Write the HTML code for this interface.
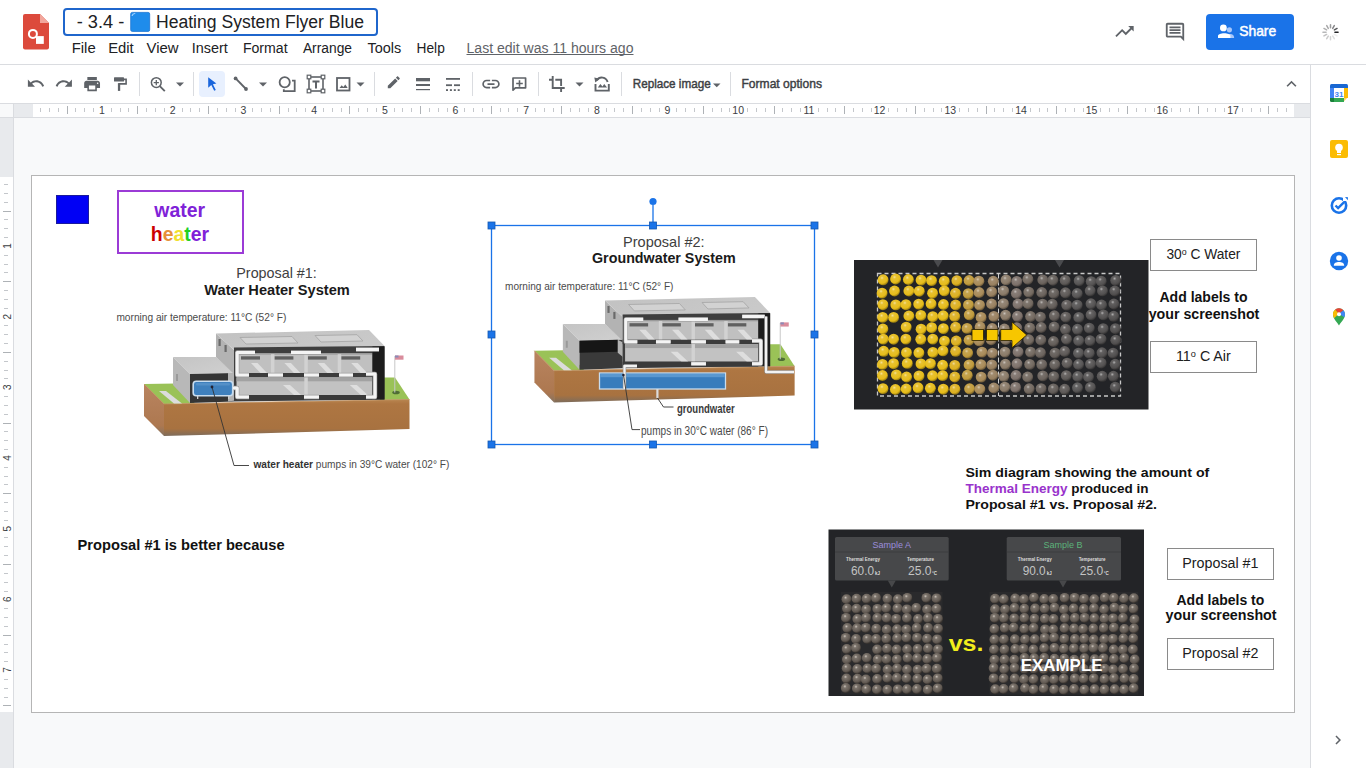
<!DOCTYPE html>
<html><head><meta charset="utf-8">
<style>
*{margin:0;padding:0;box-sizing:border-box}
html,body{width:1366px;height:768px;overflow:hidden;background:#fff;font-family:"Liberation Sans",sans-serif;color:#202124}
svg{position:absolute;left:0;top:0}
</style></head><body>

<svg width="1366" height="768" viewBox="0 0 1366 768">
<rect x="0" y="0" width="1366" height="768" fill="#ffffff"/>
<rect x="14" y="118" width="1296" height="650" fill="#f8f9fa"/>
<rect x="0" y="64" width="1366" height="1" fill="#dadce0"/>
<rect x="0" y="103" width="1310" height="1" fill="#dadce0"/>
<rect x="1310" y="65" width="1" height="703" fill="#dadce0"/>
<rect x="0" y="104" width="14" height="13" fill="#f8f9fa"/>
<rect x="14" y="104" width="19" height="13" fill="#e8eaed"/>
<rect x="1294" y="104" width="16" height="13" fill="#e8eaed"/>
<rect x="0" y="117" width="1310" height="1" fill="#dadce0"/>
<rect x="0" y="118" width="13" height="650" fill="#ffffff"/>
<rect x="0" y="118" width="13" height="59" fill="#e8eaed"/>
<rect x="0" y="712" width="13" height="56" fill="#e8eaed"/>
<rect x="13" y="104" width="1" height="664" fill="#dadce0"/>
<rect x="40" y="108" width="1" height="4" fill="#c4c7cb"/>
<rect x="49" y="108" width="1" height="4" fill="#c4c7cb"/>
<rect x="58" y="108" width="1" height="4" fill="#c4c7cb"/>
<rect x="67" y="106" width="1" height="8" fill="#aeb2b6"/>
<rect x="75" y="108" width="1" height="4" fill="#c4c7cb"/>
<rect x="84" y="108" width="1" height="4" fill="#c4c7cb"/>
<rect x="93" y="108" width="1" height="4" fill="#c4c7cb"/>
<text x="102.0" y="114" font-size="10.5" fill="#3c4043" font-weight="normal" text-anchor="middle" font-family='"Liberation Sans",sans-serif' >1</text>
<rect x="111" y="108" width="1" height="4" fill="#c4c7cb"/>
<rect x="120" y="108" width="1" height="4" fill="#c4c7cb"/>
<rect x="128" y="108" width="1" height="4" fill="#c4c7cb"/>
<rect x="137" y="106" width="1" height="8" fill="#aeb2b6"/>
<rect x="146" y="108" width="1" height="4" fill="#c4c7cb"/>
<rect x="155" y="108" width="1" height="4" fill="#c4c7cb"/>
<rect x="164" y="108" width="1" height="4" fill="#c4c7cb"/>
<text x="172.7" y="114" font-size="10.5" fill="#3c4043" font-weight="normal" text-anchor="middle" font-family='"Liberation Sans",sans-serif' >2</text>
<rect x="182" y="108" width="1" height="4" fill="#c4c7cb"/>
<rect x="190" y="108" width="1" height="4" fill="#c4c7cb"/>
<rect x="199" y="108" width="1" height="4" fill="#c4c7cb"/>
<rect x="208" y="106" width="1" height="8" fill="#aeb2b6"/>
<rect x="217" y="108" width="1" height="4" fill="#c4c7cb"/>
<rect x="226" y="108" width="1" height="4" fill="#c4c7cb"/>
<rect x="235" y="108" width="1" height="4" fill="#c4c7cb"/>
<text x="243.4" y="114" font-size="10.5" fill="#3c4043" font-weight="normal" text-anchor="middle" font-family='"Liberation Sans",sans-serif' >3</text>
<rect x="252" y="108" width="1" height="4" fill="#c4c7cb"/>
<rect x="261" y="108" width="1" height="4" fill="#c4c7cb"/>
<rect x="270" y="108" width="1" height="4" fill="#c4c7cb"/>
<rect x="279" y="106" width="1" height="8" fill="#aeb2b6"/>
<rect x="288" y="108" width="1" height="4" fill="#c4c7cb"/>
<rect x="296" y="108" width="1" height="4" fill="#c4c7cb"/>
<rect x="305" y="108" width="1" height="4" fill="#c4c7cb"/>
<text x="314.1" y="114" font-size="10.5" fill="#3c4043" font-weight="normal" text-anchor="middle" font-family='"Liberation Sans",sans-serif' >4</text>
<rect x="323" y="108" width="1" height="4" fill="#c4c7cb"/>
<rect x="332" y="108" width="1" height="4" fill="#c4c7cb"/>
<rect x="341" y="108" width="1" height="4" fill="#c4c7cb"/>
<rect x="349" y="106" width="1" height="8" fill="#aeb2b6"/>
<rect x="358" y="108" width="1" height="4" fill="#c4c7cb"/>
<rect x="367" y="108" width="1" height="4" fill="#c4c7cb"/>
<rect x="376" y="108" width="1" height="4" fill="#c4c7cb"/>
<text x="384.8" y="114" font-size="10.5" fill="#3c4043" font-weight="normal" text-anchor="middle" font-family='"Liberation Sans",sans-serif' >5</text>
<rect x="394" y="108" width="1" height="4" fill="#c4c7cb"/>
<rect x="402" y="108" width="1" height="4" fill="#c4c7cb"/>
<rect x="411" y="108" width="1" height="4" fill="#c4c7cb"/>
<rect x="420" y="106" width="1" height="8" fill="#aeb2b6"/>
<rect x="429" y="108" width="1" height="4" fill="#c4c7cb"/>
<rect x="438" y="108" width="1" height="4" fill="#c4c7cb"/>
<rect x="447" y="108" width="1" height="4" fill="#c4c7cb"/>
<text x="455.4" y="114" font-size="10.5" fill="#3c4043" font-weight="normal" text-anchor="middle" font-family='"Liberation Sans",sans-serif' >6</text>
<rect x="464" y="108" width="1" height="4" fill="#c4c7cb"/>
<rect x="473" y="108" width="1" height="4" fill="#c4c7cb"/>
<rect x="482" y="108" width="1" height="4" fill="#c4c7cb"/>
<rect x="491" y="106" width="1" height="8" fill="#aeb2b6"/>
<rect x="500" y="108" width="1" height="4" fill="#c4c7cb"/>
<rect x="508" y="108" width="1" height="4" fill="#c4c7cb"/>
<rect x="517" y="108" width="1" height="4" fill="#c4c7cb"/>
<text x="526.1" y="114" font-size="10.5" fill="#3c4043" font-weight="normal" text-anchor="middle" font-family='"Liberation Sans",sans-serif' >7</text>
<rect x="535" y="108" width="1" height="4" fill="#c4c7cb"/>
<rect x="544" y="108" width="1" height="4" fill="#c4c7cb"/>
<rect x="553" y="108" width="1" height="4" fill="#c4c7cb"/>
<rect x="561" y="106" width="1" height="8" fill="#aeb2b6"/>
<rect x="570" y="108" width="1" height="4" fill="#c4c7cb"/>
<rect x="579" y="108" width="1" height="4" fill="#c4c7cb"/>
<rect x="588" y="108" width="1" height="4" fill="#c4c7cb"/>
<text x="596.8" y="114" font-size="10.5" fill="#3c4043" font-weight="normal" text-anchor="middle" font-family='"Liberation Sans",sans-serif' >8</text>
<rect x="606" y="108" width="1" height="4" fill="#c4c7cb"/>
<rect x="614" y="108" width="1" height="4" fill="#c4c7cb"/>
<rect x="623" y="108" width="1" height="4" fill="#c4c7cb"/>
<rect x="632" y="106" width="1" height="8" fill="#aeb2b6"/>
<rect x="641" y="108" width="1" height="4" fill="#c4c7cb"/>
<rect x="650" y="108" width="1" height="4" fill="#c4c7cb"/>
<rect x="659" y="108" width="1" height="4" fill="#c4c7cb"/>
<text x="667.5" y="114" font-size="10.5" fill="#3c4043" font-weight="normal" text-anchor="middle" font-family='"Liberation Sans",sans-serif' >9</text>
<rect x="676" y="108" width="1" height="4" fill="#c4c7cb"/>
<rect x="685" y="108" width="1" height="4" fill="#c4c7cb"/>
<rect x="694" y="108" width="1" height="4" fill="#c4c7cb"/>
<rect x="703" y="106" width="1" height="8" fill="#aeb2b6"/>
<rect x="712" y="108" width="1" height="4" fill="#c4c7cb"/>
<rect x="721" y="108" width="1" height="4" fill="#c4c7cb"/>
<rect x="729" y="108" width="1" height="4" fill="#c4c7cb"/>
<text x="738.2" y="114" font-size="10.5" fill="#3c4043" font-weight="normal" text-anchor="middle" font-family='"Liberation Sans",sans-serif' >10</text>
<rect x="747" y="108" width="1" height="4" fill="#c4c7cb"/>
<rect x="756" y="108" width="1" height="4" fill="#c4c7cb"/>
<rect x="765" y="108" width="1" height="4" fill="#c4c7cb"/>
<rect x="774" y="106" width="1" height="8" fill="#aeb2b6"/>
<rect x="782" y="108" width="1" height="4" fill="#c4c7cb"/>
<rect x="791" y="108" width="1" height="4" fill="#c4c7cb"/>
<rect x="800" y="108" width="1" height="4" fill="#c4c7cb"/>
<text x="808.9" y="114" font-size="10.5" fill="#3c4043" font-weight="normal" text-anchor="middle" font-family='"Liberation Sans",sans-serif' >11</text>
<rect x="818" y="108" width="1" height="4" fill="#c4c7cb"/>
<rect x="827" y="108" width="1" height="4" fill="#c4c7cb"/>
<rect x="835" y="108" width="1" height="4" fill="#c4c7cb"/>
<rect x="844" y="106" width="1" height="8" fill="#aeb2b6"/>
<rect x="853" y="108" width="1" height="4" fill="#c4c7cb"/>
<rect x="862" y="108" width="1" height="4" fill="#c4c7cb"/>
<rect x="871" y="108" width="1" height="4" fill="#c4c7cb"/>
<text x="879.6" y="114" font-size="10.5" fill="#3c4043" font-weight="normal" text-anchor="middle" font-family='"Liberation Sans",sans-serif' >12</text>
<rect x="888" y="108" width="1" height="4" fill="#c4c7cb"/>
<rect x="897" y="108" width="1" height="4" fill="#c4c7cb"/>
<rect x="906" y="108" width="1" height="4" fill="#c4c7cb"/>
<rect x="915" y="106" width="1" height="8" fill="#aeb2b6"/>
<rect x="924" y="108" width="1" height="4" fill="#c4c7cb"/>
<rect x="933" y="108" width="1" height="4" fill="#c4c7cb"/>
<rect x="941" y="108" width="1" height="4" fill="#c4c7cb"/>
<text x="950.3" y="114" font-size="10.5" fill="#3c4043" font-weight="normal" text-anchor="middle" font-family='"Liberation Sans",sans-serif' >13</text>
<rect x="959" y="108" width="1" height="4" fill="#c4c7cb"/>
<rect x="968" y="108" width="1" height="4" fill="#c4c7cb"/>
<rect x="977" y="108" width="1" height="4" fill="#c4c7cb"/>
<rect x="986" y="106" width="1" height="8" fill="#aeb2b6"/>
<rect x="994" y="108" width="1" height="4" fill="#c4c7cb"/>
<rect x="1003" y="108" width="1" height="4" fill="#c4c7cb"/>
<rect x="1012" y="108" width="1" height="4" fill="#c4c7cb"/>
<text x="1021.0" y="114" font-size="10.5" fill="#3c4043" font-weight="normal" text-anchor="middle" font-family='"Liberation Sans",sans-serif' >14</text>
<rect x="1030" y="108" width="1" height="4" fill="#c4c7cb"/>
<rect x="1039" y="108" width="1" height="4" fill="#c4c7cb"/>
<rect x="1047" y="108" width="1" height="4" fill="#c4c7cb"/>
<rect x="1056" y="106" width="1" height="8" fill="#aeb2b6"/>
<rect x="1065" y="108" width="1" height="4" fill="#c4c7cb"/>
<rect x="1074" y="108" width="1" height="4" fill="#c4c7cb"/>
<rect x="1083" y="108" width="1" height="4" fill="#c4c7cb"/>
<text x="1091.6" y="114" font-size="10.5" fill="#3c4043" font-weight="normal" text-anchor="middle" font-family='"Liberation Sans",sans-serif' >15</text>
<rect x="1100" y="108" width="1" height="4" fill="#c4c7cb"/>
<rect x="1109" y="108" width="1" height="4" fill="#c4c7cb"/>
<rect x="1118" y="108" width="1" height="4" fill="#c4c7cb"/>
<rect x="1127" y="106" width="1" height="8" fill="#aeb2b6"/>
<rect x="1136" y="108" width="1" height="4" fill="#c4c7cb"/>
<rect x="1145" y="108" width="1" height="4" fill="#c4c7cb"/>
<rect x="1154" y="108" width="1" height="4" fill="#c4c7cb"/>
<text x="1162.3" y="114" font-size="10.5" fill="#3c4043" font-weight="normal" text-anchor="middle" font-family='"Liberation Sans",sans-serif' >16</text>
<rect x="1171" y="108" width="1" height="4" fill="#c4c7cb"/>
<rect x="1180" y="108" width="1" height="4" fill="#c4c7cb"/>
<rect x="1189" y="108" width="1" height="4" fill="#c4c7cb"/>
<rect x="1198" y="106" width="1" height="8" fill="#aeb2b6"/>
<rect x="1207" y="108" width="1" height="4" fill="#c4c7cb"/>
<rect x="1215" y="108" width="1" height="4" fill="#c4c7cb"/>
<rect x="1224" y="108" width="1" height="4" fill="#c4c7cb"/>
<text x="1233.0" y="114" font-size="10.5" fill="#3c4043" font-weight="normal" text-anchor="middle" font-family='"Liberation Sans",sans-serif' >17</text>
<rect x="1242" y="108" width="1" height="4" fill="#c4c7cb"/>
<rect x="1251" y="108" width="1" height="4" fill="#c4c7cb"/>
<rect x="1260" y="108" width="1" height="4" fill="#c4c7cb"/>
<rect x="1268" y="106" width="1" height="8" fill="#aeb2b6"/>
<rect x="1277" y="108" width="1" height="4" fill="#c4c7cb"/>
<rect x="1286" y="108" width="1" height="4" fill="#c4c7cb"/>
<rect x="4" y="184" width="4" height="1" fill="#c4c7cb"/>
<rect x="4" y="193" width="4" height="1" fill="#c4c7cb"/>
<rect x="4" y="202" width="4" height="1" fill="#c4c7cb"/>
<rect x="3" y="211" width="8" height="1" fill="#aeb2b6"/>
<rect x="4" y="219" width="4" height="1" fill="#c4c7cb"/>
<rect x="4" y="228" width="4" height="1" fill="#c4c7cb"/>
<rect x="4" y="237" width="4" height="1" fill="#c4c7cb"/>
<g transform="translate(7.5,245.9) rotate(-90)"><text x="0" y="3.6" font-size="10" fill="#3c4043" font-weight="normal" text-anchor="middle" font-family='"Liberation Sans",sans-serif' >1</text></g>
<rect x="4" y="255" width="4" height="1" fill="#c4c7cb"/>
<rect x="4" y="264" width="4" height="1" fill="#c4c7cb"/>
<rect x="4" y="272" width="4" height="1" fill="#c4c7cb"/>
<rect x="3" y="281" width="8" height="1" fill="#aeb2b6"/>
<rect x="4" y="290" width="4" height="1" fill="#c4c7cb"/>
<rect x="4" y="299" width="4" height="1" fill="#c4c7cb"/>
<rect x="4" y="308" width="4" height="1" fill="#c4c7cb"/>
<g transform="translate(7.5,316.6) rotate(-90)"><text x="0" y="3.6" font-size="10" fill="#3c4043" font-weight="normal" text-anchor="middle" font-family='"Liberation Sans",sans-serif' >2</text></g>
<rect x="4" y="325" width="4" height="1" fill="#c4c7cb"/>
<rect x="4" y="334" width="4" height="1" fill="#c4c7cb"/>
<rect x="4" y="343" width="4" height="1" fill="#c4c7cb"/>
<rect x="3" y="352" width="8" height="1" fill="#aeb2b6"/>
<rect x="4" y="361" width="4" height="1" fill="#c4c7cb"/>
<rect x="4" y="370" width="4" height="1" fill="#c4c7cb"/>
<rect x="4" y="378" width="4" height="1" fill="#c4c7cb"/>
<g transform="translate(7.5,387.3) rotate(-90)"><text x="0" y="3.6" font-size="10" fill="#3c4043" font-weight="normal" text-anchor="middle" font-family='"Liberation Sans",sans-serif' >3</text></g>
<rect x="4" y="396" width="4" height="1" fill="#c4c7cb"/>
<rect x="4" y="405" width="4" height="1" fill="#c4c7cb"/>
<rect x="4" y="414" width="4" height="1" fill="#c4c7cb"/>
<rect x="3" y="423" width="8" height="1" fill="#aeb2b6"/>
<rect x="4" y="431" width="4" height="1" fill="#c4c7cb"/>
<rect x="4" y="440" width="4" height="1" fill="#c4c7cb"/>
<rect x="4" y="449" width="4" height="1" fill="#c4c7cb"/>
<g transform="translate(7.5,458.0) rotate(-90)"><text x="0" y="3.6" font-size="10" fill="#3c4043" font-weight="normal" text-anchor="middle" font-family='"Liberation Sans",sans-serif' >4</text></g>
<rect x="4" y="467" width="4" height="1" fill="#c4c7cb"/>
<rect x="4" y="476" width="4" height="1" fill="#c4c7cb"/>
<rect x="4" y="484" width="4" height="1" fill="#c4c7cb"/>
<rect x="3" y="493" width="8" height="1" fill="#aeb2b6"/>
<rect x="4" y="502" width="4" height="1" fill="#c4c7cb"/>
<rect x="4" y="511" width="4" height="1" fill="#c4c7cb"/>
<rect x="4" y="520" width="4" height="1" fill="#c4c7cb"/>
<g transform="translate(7.5,528.6) rotate(-90)"><text x="0" y="3.6" font-size="10" fill="#3c4043" font-weight="normal" text-anchor="middle" font-family='"Liberation Sans",sans-serif' >5</text></g>
<rect x="4" y="537" width="4" height="1" fill="#c4c7cb"/>
<rect x="4" y="546" width="4" height="1" fill="#c4c7cb"/>
<rect x="4" y="555" width="4" height="1" fill="#c4c7cb"/>
<rect x="3" y="564" width="8" height="1" fill="#aeb2b6"/>
<rect x="4" y="573" width="4" height="1" fill="#c4c7cb"/>
<rect x="4" y="582" width="4" height="1" fill="#c4c7cb"/>
<rect x="4" y="591" width="4" height="1" fill="#c4c7cb"/>
<g transform="translate(7.5,599.3) rotate(-90)"><text x="0" y="3.6" font-size="10" fill="#3c4043" font-weight="normal" text-anchor="middle" font-family='"Liberation Sans",sans-serif' >6</text></g>
<rect x="4" y="608" width="4" height="1" fill="#c4c7cb"/>
<rect x="4" y="617" width="4" height="1" fill="#c4c7cb"/>
<rect x="4" y="626" width="4" height="1" fill="#c4c7cb"/>
<rect x="3" y="635" width="8" height="1" fill="#aeb2b6"/>
<rect x="4" y="644" width="4" height="1" fill="#c4c7cb"/>
<rect x="4" y="652" width="4" height="1" fill="#c4c7cb"/>
<rect x="4" y="661" width="4" height="1" fill="#c4c7cb"/>
<g transform="translate(7.5,670.0) rotate(-90)"><text x="0" y="3.6" font-size="10" fill="#3c4043" font-weight="normal" text-anchor="middle" font-family='"Liberation Sans",sans-serif' >7</text></g>
<rect x="4" y="679" width="4" height="1" fill="#c4c7cb"/>
<rect x="4" y="688" width="4" height="1" fill="#c4c7cb"/>
<rect x="4" y="697" width="4" height="1" fill="#c4c7cb"/>
<rect x="3" y="705" width="8" height="1" fill="#aeb2b6"/>
<rect x="31.5" y="175.5" width="1263" height="537" fill="#ffffff" stroke="#b5b5b5" stroke-width="1"/>
<path d="M25 14h15l9 9v24.5a2 2 0 0 1-2 2H25a2 2 0 0 1-2-2V16a2 2 0 0 1 2-2z" fill="#dc4a3c"/>
<path d="M40 14l9 9h-9z" fill="#f2a69c"/>
<circle cx="32.9" cy="33.9" r="4" fill="none" stroke="#fff" stroke-width="2"/>
<rect x="36" y="36.1" width="7.8" height="7.8" fill="#fff"/>
<rect x="64" y="9" width="313" height="26" rx="3" fill="#fff" stroke="#1f66cc" stroke-width="2"/>
<text x="76.7" y="28" font-size="18" fill="#202124" font-weight="normal" text-anchor="start" font-family='"Liberation Sans",sans-serif' textLength="47.5" lengthAdjust="spacingAndGlyphs" >- 3.4 -</text>
<rect x="130.7" y="12.4" width="19" height="19" rx="1.6" fill="#1f8ceb" stroke="#1a74d2" stroke-width="0.8"/>
<path d="M132.2 15.5c.3-1.2 1.2-1.9 2.6-2" fill="none" stroke="#9fd0ff" stroke-width="1.2" stroke-linecap="round"/>
<text x="156" y="28" font-size="18" fill="#202124" font-weight="normal" text-anchor="start" font-family='"Liberation Sans",sans-serif' textLength="208" lengthAdjust="spacingAndGlyphs" >Heating System Flyer Blue</text>
<text x="71.7" y="52.5" font-size="14" fill="#202124" font-weight="normal" text-anchor="start" font-family='"Liberation Sans",sans-serif' textLength="24" lengthAdjust="spacingAndGlyphs" >File</text>
<text x="108.2" y="52.5" font-size="14" fill="#202124" font-weight="normal" text-anchor="start" font-family='"Liberation Sans",sans-serif' textLength="25.5" lengthAdjust="spacingAndGlyphs" >Edit</text>
<text x="146.6" y="52.5" font-size="14" fill="#202124" font-weight="normal" text-anchor="start" font-family='"Liberation Sans",sans-serif' textLength="32" lengthAdjust="spacingAndGlyphs" >View</text>
<text x="191.7" y="52.5" font-size="14" fill="#202124" font-weight="normal" text-anchor="start" font-family='"Liberation Sans",sans-serif' textLength="36" lengthAdjust="spacingAndGlyphs" >Insert</text>
<text x="242.9" y="52.5" font-size="14" fill="#202124" font-weight="normal" text-anchor="start" font-family='"Liberation Sans",sans-serif' textLength="44.7" lengthAdjust="spacingAndGlyphs" >Format</text>
<text x="302.9" y="52.5" font-size="14" fill="#202124" font-weight="normal" text-anchor="start" font-family='"Liberation Sans",sans-serif' textLength="49.1" lengthAdjust="spacingAndGlyphs" >Arrange</text>
<text x="367.6" y="52.5" font-size="14" fill="#202124" font-weight="normal" text-anchor="start" font-family='"Liberation Sans",sans-serif' textLength="33.7" lengthAdjust="spacingAndGlyphs" >Tools</text>
<text x="416.6" y="52.5" font-size="14" fill="#202124" font-weight="normal" text-anchor="start" font-family='"Liberation Sans",sans-serif' textLength="28.2" lengthAdjust="spacingAndGlyphs" >Help</text>
<text x="466.5" y="52.5" font-size="14" fill="#5f6368" font-weight="normal" text-anchor="start" font-family='"Liberation Sans",sans-serif' textLength="167" lengthAdjust="spacingAndGlyphs" >Last edit was 11 hours ago</text>
<rect x="466.5" y="54" width="167" height="1" fill="#5f6368"/>
<g transform="translate(1113.5,20.5) scale(0.9166666666666666)" fill="#5f6368"><path d="M16 6l2.29 2.29-4.88 4.88-4-4L2 16.59 3.41 18l6-6 4 4 6.3-6.29L22 12V6z"/></g>
<g transform="translate(1164.0,21.0) scale(0.9166666666666666)" fill="#5f6368"><path d="M21.99 4c0-1.1-.89-2-1.99-2H4c-1.1 0-2 .9-2 2v12c0 1.1.9 2 2 2h14l4 4-.01-18zM20 4v13.17L18.83 16H4V4h16zM6 12h12v2H6zm0-3h12v2H6zm0-3h12v2H6z"/></g>
<rect x="1206" y="14" width="88" height="36" rx="4" fill="#1a73e8"/>
<circle cx="1229.4" cy="29.8" r="2.6" fill="#a8c7fa"/><path d="M1227 37.9V35.3c0-.9.8-1.3 2.3-1.3h1.2c2 0 3.6 1.3 3.6 3.2v.7z" fill="#a8c7fa"/>
<circle cx="1223.4" cy="27.9" r="3.4" fill="#fff"/><path d="M1218 37.9V35.9c0-1.6 2.8-2.7 6.2-2.7s6.2 1.1 6.2 2.7V37.9z" fill="#fff"/>
<text x="1239.2" y="36" font-size="14.5" fill="#ffffff" font-weight="normal" text-anchor="start" font-family='"Liberation Sans",sans-serif' textLength="37" lengthAdjust="spacingAndGlyphs" stroke="#ffffff" stroke-width="0.5">Share</text>
<g transform="translate(1330.5,32.2) rotate(0)"><rect x="-0.75" y="-8.3" width="1.5" height="4.6" rx="0.75" fill="#202124" opacity="0.45"/></g>
<g transform="translate(1330.5,32.2) rotate(30)"><rect x="-0.75" y="-8.3" width="1.5" height="4.6" rx="0.75" fill="#202124" opacity="0.55"/></g>
<g transform="translate(1330.5,32.2) rotate(60)"><rect x="-0.75" y="-8.3" width="1.5" height="4.6" rx="0.75" fill="#202124" opacity="0.75"/></g>
<g transform="translate(1330.5,32.2) rotate(90)"><rect x="-0.75" y="-8.3" width="1.5" height="4.6" rx="0.75" fill="#202124" opacity="1.00"/></g>
<g transform="translate(1330.5,32.2) rotate(120)"><rect x="-0.75" y="-8.3" width="1.5" height="4.6" rx="0.75" fill="#202124" opacity="0.08"/></g>
<g transform="translate(1330.5,32.2) rotate(150)"><rect x="-0.75" y="-8.3" width="1.5" height="4.6" rx="0.75" fill="#202124" opacity="0.15"/></g>
<g transform="translate(1330.5,32.2) rotate(180)"><rect x="-0.75" y="-8.3" width="1.5" height="4.6" rx="0.75" fill="#202124" opacity="0.20"/></g>
<g transform="translate(1330.5,32.2) rotate(210)"><rect x="-0.75" y="-8.3" width="1.5" height="4.6" rx="0.75" fill="#202124" opacity="0.24"/></g>
<g transform="translate(1330.5,32.2) rotate(240)"><rect x="-0.75" y="-8.3" width="1.5" height="4.6" rx="0.75" fill="#202124" opacity="0.28"/></g>
<g transform="translate(1330.5,32.2) rotate(270)"><rect x="-0.75" y="-8.3" width="1.5" height="4.6" rx="0.75" fill="#202124" opacity="0.32"/></g>
<g transform="translate(1330.5,32.2) rotate(300)"><rect x="-0.75" y="-8.3" width="1.5" height="4.6" rx="0.75" fill="#202124" opacity="0.36"/></g>
<g transform="translate(1330.5,32.2) rotate(330)"><rect x="-0.75" y="-8.3" width="1.5" height="4.6" rx="0.75" fill="#202124" opacity="0.40"/></g>
<rect x="139" y="72" width="1" height="24" fill="#dadce0"/>
<rect x="193" y="72" width="1" height="24" fill="#dadce0"/>
<rect x="374" y="72" width="1" height="24" fill="#dadce0"/>
<rect x="472" y="72" width="1" height="24" fill="#dadce0"/>
<rect x="538" y="72" width="1" height="24" fill="#dadce0"/>
<rect x="621" y="72" width="1" height="24" fill="#dadce0"/>
<rect x="730" y="72" width="1" height="24" fill="#dadce0"/>
<rect x="199" y="71" width="26" height="26" rx="4" fill="#e8f0fe"/>
<g transform="translate(26.299999999999997,74.0) scale(0.7916666666666666)" fill="#5f6368"><path d="M12.5 8c-2.65 0-5.05.99-6.9 2.6L2 7v9h9l-3.62-3.62c1.39-1.16 3.16-1.88 5.12-1.88 3.54 0 6.55 2.31 7.6 5.5l2.37-.78C21.08 11.03 17.15 8 12.5 8z"/></g>
<g transform="translate(54.5,74.0) scale(0.7916666666666666)" fill="#5f6368"><path d="M18.4 10.6C16.55 8.99 14.15 8 11.5 8c-4.65 0-8.58 3.03-9.96 7.22L3.9 16c1.05-3.19 4.05-5.5 7.6-5.5 1.95 0 3.73.72 5.12 1.88L13 16h9V7l-3.6 3.6z"/></g>
<g transform="translate(82.6,74.5) scale(0.7916666666666666)" fill="#5f6368"><path d="M19 8H5c-1.66 0-3 1.34-3 3v6h4v4h12v-4h4v-6c0-1.66-1.34-3-3-3zm-3 11H8v-5h8v5zm3-7c-.55 0-1-.45-1-1s.45-1 1-1 1 .45 1 1-.45 1-1 1zm-1-9H6v4h12V3z"/></g>
<g transform="translate(480.5,73.5) scale(0.875)" fill="#5f6368"><path d="M3.9 12c0-1.71 1.39-3.1 3.1-3.1h4V7H7c-2.76 0-5 2.24-5 5s2.24 5 5 5h4v-1.9H7c-1.71 0-3.1-1.39-3.1-3.1zM8 13h8v-2H8v2zm9-6h-4v1.9h4c1.71 0 3.1 1.39 3.1 3.1s-1.39 3.1-3.1 3.1h-4V17h4c2.76 0 5-2.24 5-5s-2.24-5-5-5z"/></g>
<g transform="translate(385.8,74.3) scale(0.6666666666666666)" fill="#5f6368"><path d="M3 17.25V21h3.75L17.81 9.94l-3.75-3.75L3 17.25zM20.71 7.04c.39-.39.39-1.02 0-1.41l-2.34-2.34c-.39-.39-1.02-.39-1.41 0l-1.83 1.83 3.75 3.75 1.83-1.83z"/></g>
<circle cx="156.3" cy="82.6" r="4.9" fill="none" stroke="#5f6368" stroke-width="1.5"/><path d="M156.3 80v5.2M153.7 82.6h5.2" stroke="#5f6368" stroke-width="1.3"/><path d="M159.8 86.1l5 5" stroke="#5f6368" stroke-width="1.9"/>
<rect x="416" y="78" width="14" height="3.3" fill="#5f6368"/><rect x="416" y="84" width="14" height="2" fill="#5f6368"/><rect x="416" y="89" width="14" height="1.2" fill="#5f6368"/>
<rect x="446" y="78" width="14" height="1.8" fill="#5f6368"/><rect x="446" y="84.3" width="6" height="1.8" fill="#5f6368"/><rect x="454" y="84.3" width="6" height="1.8" fill="#5f6368"/>
<rect x="446.0" y="89.2" width="2" height="1.8" fill="#5f6368"/>
<rect x="449.9" y="89.2" width="2" height="1.8" fill="#5f6368"/>
<rect x="453.8" y="89.2" width="2" height="1.8" fill="#5f6368"/>
<rect x="457.7" y="89.2" width="2" height="1.8" fill="#5f6368"/>
<path d="M552.7 76v12h12M549 79.7h3.7M555.3 79.7h5.8v6.3M561.1 88v4" fill="none" stroke="#5f6368" stroke-width="1.9"/>
<rect x="114" y="77.3" width="10" height="4.3" rx="0.6" fill="#5f6368"/><path d="M123.5 79.4h2.6v4.5h-7" fill="none" stroke="#5f6368" stroke-width="1.6"/><rect x="117.9" y="83.1" width="2.3" height="7.8" fill="#5f6368"/>
<path d="M176 82.5h8l-4 4z" fill="#5f6368"/>
<path d="M259 82.5h8l-4 4z" fill="#5f6368"/>
<path d="M356.5 82.5h8l-4 4z" fill="#5f6368"/>
<path d="M575.5 82.5h8l-4 4z" fill="#5f6368"/>
<path d="M208.2 77.2L216.4 83.6L212.9 84.2L215.8 89.9L214.2 90.7L211.3 85L208.2 87.8Z" fill="#1a66dc"/>
<line x1="235.6" y1="78.4" x2="246" y2="89" stroke="#5f6368" stroke-width="1.9"/><circle cx="235.6" cy="78.4" r="1.9" fill="#5f6368"/><circle cx="246" cy="89" r="1.9" fill="#5f6368"/>
<circle cx="284.7" cy="82.2" r="5.1" fill="none" stroke="#5f6368" stroke-width="1.8"/><path d="M292 80.6H294.7V91.2H283.8V89.2" fill="none" stroke="#5f6368" stroke-width="1.8"/>
<rect x="309" y="77" width="14" height="14" fill="none" stroke="#5f6368" stroke-width="1.6"/>
<rect x="307.2" y="75.2" width="3.6" height="3.6" fill="#fff" stroke="#5f6368" stroke-width="1.2"/>
<rect x="321.2" y="75.2" width="3.6" height="3.6" fill="#fff" stroke="#5f6368" stroke-width="1.2"/>
<rect x="307.2" y="89.2" width="3.6" height="3.6" fill="#fff" stroke="#5f6368" stroke-width="1.2"/>
<rect x="321.2" y="89.2" width="3.6" height="3.6" fill="#fff" stroke="#5f6368" stroke-width="1.2"/>
<path d="M312.5 80.5h7v2h-2.5v6h-2v-6h-2.5z" fill="#5f6368"/>
<rect x="337" y="78" width="12.5" height="12.5" fill="none" stroke="#5f6368" stroke-width="1.8"/><path d="M339.5 88l2.2-2.8 1.6 1.8 2-2.6 2.4 3.6z" fill="#5f6368"/>
<path d="M513 78h12.6v9.8h-10.2l-2.4 2.4z" fill="none" stroke="#5f6368" stroke-width="1.7" stroke-linejoin="round"/><path d="M518.7 80.2h1.6v2.5h2.5v1.6h-2.5v2.5h-1.6v-2.5h-2.5v-1.6h2.5z" fill="#5f6368"/>
<path d="M595.5 84v6.6h13.3V84" fill="none" stroke="#5f6368" stroke-width="1.9"/><path d="M596.8 80.2a6 6 0 0 1 10.8 1.8" fill="none" stroke="#5f6368" stroke-width="1.9"/><path d="M594.3 77.6l5.6 1.2-4.6 3.6z" fill="#5f6368"/><path d="M597.8 87.5l2.6-3.6 2.1 2.5 1.7-2.3 2.9 3.4z" fill="#5f6368"/>
<text x="632.7" y="88.3" font-size="13" fill="#3c4043" font-weight="normal" text-anchor="start" font-family='"Liberation Sans",sans-serif' textLength="78" lengthAdjust="spacingAndGlyphs" stroke="#3c4043" stroke-width="0.45">Replace image</text>
<path d="M713 83.5h7.5l-3.75 3.75z" fill="#5f6368"/>
<text x="741.5" y="88.3" font-size="13" fill="#3c4043" font-weight="normal" text-anchor="start" font-family='"Liberation Sans",sans-serif' textLength="80.5" lengthAdjust="spacingAndGlyphs" stroke="#3c4043" stroke-width="0.45">Format options</text>
<g transform="translate(1281.5,74.0) scale(0.8333333333333334)" fill="#5f6368"><path d="M12 8l-6 6 1.41 1.41L12 10.83l4.59 4.58L18 14z"/></g>
<rect x="1330" y="84" width="18" height="18" rx="1.5" fill="#fff"/>
<path d="M1334 84h10v4h-10z" fill="#1967d2"/>
<path d="M1330 88h4v10h-4z" fill="#4285f4"/><path d="M1331.5 84h2.5v4h-4v-2.5a1.5 1.5 0 0 1 1.5-1.5z" fill="#1967d2"/>
<path d="M1344 84h2.5a1.5 1.5 0 0 1 1.5 1.5v2.5h-4z" fill="#1967d2"/><path d="M1344 88h4v10h-4z" fill="#fbbc04"/>
<path d="M1334 98h10v4h-10z" fill="#34a853"/><path d="M1330 98h4v4h-2.5a1.5 1.5 0 0 1-1.5-1.5z" fill="#188038"/><path d="M1344 98h4l-4 4z" fill="#fff"/><path d="M1344 98h3.2l-3.2 3.2z" fill="#fbbc04" opacity="0.6"/>
<text x="1339" y="96.5" font-size="8" fill="#4285f4" font-weight="bold" text-anchor="middle" font-family='"Liberation Sans",sans-serif' >31</text>
<rect x="1330" y="140" width="18" height="18" rx="2" fill="#fbbc04"/>
<circle cx="1339" cy="147.5" r="3.8" fill="#fff"/><rect x="1337" y="150" width="4" height="3" fill="#fff"/><rect x="1337" y="154" width="4" height="1.2" fill="#fff"/>
<circle cx="1339" cy="205.5" r="7.2" fill="none" stroke="#1a73e8" stroke-width="2.6"/>
<rect x="1343" y="196" width="6" height="5" fill="#fff"/><path d="M1335.5 205.5l2.6 2.6 6-6" fill="none" stroke="#1a73e8" stroke-width="2.4"/><path d="M1345 197l3 .2-.2 3z" fill="#1a73e8"/>
<circle cx="1339" cy="261" r="9.2" fill="#1a73e8"/><circle cx="1339" cy="258" r="2.8" fill="#fff"/><path d="M1333.8 265.8c0-2.8 2.4-3.8 5.2-3.8s5.2 1 5.2 3.8z" fill="#fff"/>
<path d="M1339 325.5c-1.2-2.6-6-6.6-6-11.3a6 6 0 0 1 12 0c0 4.7-4.8 8.7-6 11.3z" fill="#34a853"/>
<path d="M1333 314.2a6 6 0 0 1 2.2-4.6l3.8 4.1-5 4.5c-.6-1.2-1-2.5-1-4z" fill="#fbbc04"/>
<path d="M1335.2 309.6a6 6 0 0 1 3.8-1.4 6 6 0 0 1 4.4 2l-4.4 3.5z" fill="#ea4335"/>
<path d="M1343.4 310.2a6 6 0 0 1 1.6 4c0 1-.3 2-.7 3l-5.3-3.5z" fill="#4285f4"/>
<circle cx="1339" cy="314.2" r="2" fill="#fff"/>
<g transform="translate(1329.0,731.0) scale(0.75)" fill="#5f6368"><path d="M10 6L8.59 7.41 13.17 12l-4.58 4.59L10 18l6-6z"/></g>
<rect x="56.5" y="195.5" width="32" height="28" fill="#0000f5" stroke="#1a1a9c" stroke-width="1"/>
<rect x="118" y="191" width="125" height="62" fill="#fff" stroke="#9b3bd6" stroke-width="2"/>
<text x="154.3" y="216.7" font-size="19.4" fill="#7f22d8" font-weight="bold" text-anchor="start" font-family='"Liberation Sans",sans-serif' textLength="50.7" lengthAdjust="spacingAndGlyphs" >water</text>
<text x="150.8" y="240.9" font-size="19.4" font-weight="bold" font-family='"Liberation Sans",sans-serif' textLength="58.2" lengthAdjust="spacingAndGlyphs"><tspan fill="#cc0000">h</tspan><tspan fill="#e69138">e</tspan><tspan fill="#f1e030">a</tspan><tspan fill="#22d022">t</tspan><tspan fill="#7f22d8">er</tspan></text>
<defs><linearGradient id="brn" x1="0" y1="0" x2="0" y2="1"><stop offset="0" stop-color="#b8854f"/><stop offset="0.12" stop-color="#ae7642"/><stop offset="0.8" stop-color="#a87240"/><stop offset="1" stop-color="#7d6c5c"/></linearGradient><linearGradient id="brnL" x1="0" y1="0" x2="0" y2="1"><stop offset="0" stop-color="#b98460"/><stop offset="0.8" stop-color="#ad7850"/><stop offset="1" stop-color="#857260"/></linearGradient><linearGradient id="roof" x1="0" y1="0" x2="1" y2="0.3"><stop offset="0" stop-color="#c2c2c2"/><stop offset="1" stop-color="#c9c9c9"/></linearGradient><linearGradient id="roofS" x1="0" y1="0" x2="1" y2="1"><stop offset="0" stop-color="#c4c4c4"/><stop offset="1" stop-color="#d0d0d0"/></linearGradient></defs>
<text x="236.3" y="278.3" font-size="15" fill="#404040" font-weight="normal" text-anchor="start" font-family='"Liberation Sans",sans-serif' textLength="80.5" lengthAdjust="spacingAndGlyphs" >Proposal #1:</text>
<text x="204.3" y="295.3" font-size="14.5" fill="#1a1a1a" font-weight="bold" text-anchor="start" font-family='"Liberation Sans",sans-serif' textLength="145.5" lengthAdjust="spacingAndGlyphs" >Water Heater System</text>
<text x="116.4" y="321.3" font-size="11" fill="#4a4a4a" font-weight="normal" text-anchor="start" font-family='"Liberation Sans",sans-serif' textLength="170" lengthAdjust="spacingAndGlyphs" >morning air temperature: 11°C  (52° F)</text>
<polygon points="144,384 176,383.5 195,403.5 164,404" fill="#9ac257" />
<polygon points="380,377.5 395,377.5 409.5,399.5 380,400" fill="#9ac257" />
<polygon points="144,384 164,404 164,436 144,416" fill="url(#brnL)" />
<polygon points="164,404 409.5,399.5 409.5,429 164,436" fill="url(#brn)" />
<path d="M144 384L164 404L409.5 399.5" fill="none" stroke="#c09060" stroke-width="0.8"/>
<polygon points="159,391 166,391 182,403.5 174,403.5" fill="#dcdcdc" />
<ellipse cx="396" cy="392.5" rx="3.8" ry="1.8" fill="#4f6d35"/><rect x="394.3" y="356" width="1" height="36.5" fill="#c8c8c8"/><rect x="395" y="355.5" width="8.5" height="4.2" fill="#d98c9c"/><rect x="395" y="355.5" width="3.5" height="2" fill="#8a8ab8"/>
<polygon points="173,357 216,357 234,373 190,374" fill="url(#roofS)" />
<polygon points="173,357 190,374 190,403 173,385" fill="#b8b8b8" />
<rect x="176" y="374" width="2" height="7" fill="#9a9a9a"/>
<polygon points="190,374 234,373 234,401.5 190,403" fill="#353535" />
<polygon points="228,373 239,373 239,400 228,401.5" fill="#b3b3b3" />
<rect x="193.2" y="381.3" width="39.5" height="14.5" rx="3" fill="#3f80bd" stroke="#c8dcee" stroke-width="1.6"/>
<rect x="196" y="383" width="34" height="2.5" fill="#5490c8" rx="1"/>
<rect x="197" y="396" width="1.3" height="3" fill="#cfcfcf"/><rect x="228" y="396" width="1.3" height="3" fill="#cfcfcf"/>
<polygon points="216,333.5 234,350 234,374 216,357" fill="#b3b3b3" />
<rect x="218.5" y="339" width="2.2" height="7" fill="#6a6a6a"/><rect x="224.5" y="345" width="2.2" height="7" fill="#6a6a6a"/>
<polygon points="216,333.5 369,330 384.5,346 234,350" fill="url(#roof)" />
<polygon points="240,337.5 292,336.5 298,343 246,344" fill="#d2d2d2" stroke="#a8a8a8" stroke-width="0.9"/>
<polygon points="315,335.5 357,334.7 363,341 321,342" fill="#d2d2d2" stroke="#a8a8a8" stroke-width="0.9"/>
<polygon points="234,347.5 384.5,346 384.5,399.5 234,401.5" fill="#3e3e3e" />
<rect x="236.5" y="353" width="136" height="1.2" fill="#9a9a9a"/>
<rect x="236.5" y="354.2" width="136" height="18.8" fill="#c0c0c0"/>
<rect x="241.0" y="356.3" width="19" height="3.3" fill="#606060"/>
<polygon points="251.0,363 257.5,363 267.0,373 260.5,373" fill="#dedede" />
<rect x="274.4" y="356.3" width="19" height="3.3" fill="#606060"/>
<polygon points="284.4,363 290.9,363 300.4,373 293.9,373" fill="#dedede" />
<rect x="270.9" y="354.2" width="3.5" height="18.8" fill="#d2d2d2"/>
<rect x="307.8" y="356.3" width="19" height="3.3" fill="#606060"/>
<polygon points="317.8,363 324.3,363 333.8,373 327.3,373" fill="#dedede" />
<rect x="304.3" y="354.2" width="3.5" height="18.8" fill="#d2d2d2"/>
<rect x="341.2" y="356.3" width="19" height="3.3" fill="#606060"/>
<polygon points="351.2,363 357.7,363 367.2,373 360.7,373" fill="#dedede" />
<rect x="337.7" y="354.2" width="3.5" height="18.8" fill="#d2d2d2"/>
<rect x="234" y="373" width="138.5" height="4.3" fill="#3c3c3c"/>
<rect x="236.5" y="377.3" width="136" height="17.7" fill="#c2c2c2"/>
<rect x="236.5" y="377.3" width="136" height="4" fill="#a2a2a2"/>
<polygon points="283.0,385 290.0,385 301.0,395 294.0,395" fill="#dedede" />
<polygon points="349.8,385 356.8,385 367.8,395 360.8,395" fill="#dedede" />
<rect x="304.3" y="377.3" width="3.5" height="17.7" fill="#d2d2d2"/>
<rect x="234" y="395" width="138.5" height="5" fill="#3a3a3a"/>
<rect x="372.5" y="346.5" width="12" height="53" fill="#1d1d1d"/>
<path d="M255 352.5H237.2V375H249 M291 352.5H321 M356 349.5H379 M268 375H283 M304 375H319 M339 375H353 M304 397H319 M366 374H375V397H366 M233 388H237.2V397H249" fill="none" stroke="#a0a0a0" stroke-width="4.4" stroke-linejoin="round"/>
<path d="M255 352.5H237.2V375H249 M291 352.5H321 M356 349.5H379 M268 375H283 M304 375H319 M339 375H353 M304 397H319 M366 374H375V397H366 M233 388H237.2V397H249" fill="none" stroke="#f4f4f4" stroke-width="3.1" stroke-linejoin="round"/>
<path d="M212 387L234 465.5H249" fill="none" stroke="#333" stroke-width="0.9"/><circle cx="212" cy="387" r="1.4" fill="#223"/>
<text x="253.4" y="468.1" font-size="11.5" fill="#4a4a4a" font-family='"Liberation Sans",sans-serif' textLength="196" lengthAdjust="spacingAndGlyphs"><tspan font-weight="bold" fill="#333">water heater</tspan> pumps in 39°C water (102° F)</text>
<text x="623.1" y="246.6" font-size="15" fill="#404040" font-weight="normal" text-anchor="start" font-family='"Liberation Sans",sans-serif' textLength="81.5" lengthAdjust="spacingAndGlyphs" >Proposal #2:</text>
<text x="592" y="263.4" font-size="14.5" fill="#1a1a1a" font-weight="bold" text-anchor="start" font-family='"Liberation Sans",sans-serif' textLength="143.7" lengthAdjust="spacingAndGlyphs" >Groundwater System</text>
<text x="505" y="290" font-size="11" fill="#4a4a4a" font-weight="normal" text-anchor="start" font-family='"Liberation Sans",sans-serif' textLength="168.4" lengthAdjust="spacingAndGlyphs" >morning air temperature: 11°C (52° F)</text>
<g transform="translate(605,300.5) scale(0.98,0.995) translate(-216,-333.5)"><polygon points="144,384 176,383.5 195,403.5 164,404" fill="#9ac257" />
<polygon points="380,377.5 395,377.5 409.5,399.5 380,400" fill="#9ac257" />
<polygon points="144,384 164,404 164,436 144,416" fill="url(#brnL)" />
<polygon points="164,404 409.5,399.5 409.5,429 164,436" fill="url(#brn)" />
<path d="M144 384L164 404L409.5 399.5" fill="none" stroke="#c09060" stroke-width="0.8"/>
<polygon points="159,391 166,391 182,403.5 174,403.5" fill="#dcdcdc" />
<ellipse cx="396" cy="392.5" rx="3.8" ry="1.8" fill="#4f6d35"/><rect x="394.3" y="356" width="1" height="36.5" fill="#c8c8c8"/><rect x="395" y="355.5" width="8.5" height="4.2" fill="#d98c9c"/><rect x="395" y="355.5" width="3.5" height="2" fill="#8a8ab8"/>
<polygon points="173,357 216,357 234,373 190,374" fill="url(#roofS)" />
<polygon points="173,357 190,374 190,403 173,385" fill="#b8b8b8" />
<rect x="176" y="374" width="2" height="7" fill="#9a9a9a"/>
<polygon points="190,374 234,373 234,401.5 190,403" fill="#3a3a3a" />
<polygon points="190,374 229,373 229,385 190,386" fill="#161616" />
<polygon points="229,373 239,378 239,394 229,386" fill="#b3b3b3" />
<polygon points="216,333.5 234,350 234,374 216,357" fill="#b3b3b3" />
<rect x="218.5" y="339" width="2.2" height="7" fill="#6a6a6a"/><rect x="224.5" y="345" width="2.2" height="7" fill="#6a6a6a"/>
<polygon points="216,333.5 369,330 384.5,346 234,350" fill="url(#roof)" />
<polygon points="240,337.5 292,336.5 298,343 246,344" fill="#d2d2d2" stroke="#a8a8a8" stroke-width="0.9"/>
<polygon points="315,335.5 357,334.7 363,341 321,342" fill="#d2d2d2" stroke="#a8a8a8" stroke-width="0.9"/>
<polygon points="234,347.5 384.5,346 384.5,399.5 234,401.5" fill="#3e3e3e" />
<rect x="236.5" y="353" width="136" height="1.2" fill="#9a9a9a"/>
<rect x="236.5" y="354.2" width="136" height="18.8" fill="#c0c0c0"/>
<rect x="241.0" y="356.3" width="19" height="3.3" fill="#606060"/>
<polygon points="251.0,363 257.5,363 267.0,373 260.5,373" fill="#dedede" />
<rect x="274.4" y="356.3" width="19" height="3.3" fill="#606060"/>
<polygon points="284.4,363 290.9,363 300.4,373 293.9,373" fill="#dedede" />
<rect x="270.9" y="354.2" width="3.5" height="18.8" fill="#d2d2d2"/>
<rect x="307.8" y="356.3" width="19" height="3.3" fill="#606060"/>
<polygon points="317.8,363 324.3,363 333.8,373 327.3,373" fill="#dedede" />
<rect x="304.3" y="354.2" width="3.5" height="18.8" fill="#d2d2d2"/>
<rect x="341.2" y="356.3" width="19" height="3.3" fill="#606060"/>
<polygon points="351.2,363 357.7,363 367.2,373 360.7,373" fill="#dedede" />
<rect x="337.7" y="354.2" width="3.5" height="18.8" fill="#d2d2d2"/>
<rect x="234" y="373" width="138.5" height="4.3" fill="#3c3c3c"/>
<rect x="236.5" y="377.3" width="136" height="17.7" fill="#c2c2c2"/>
<rect x="236.5" y="377.3" width="136" height="4" fill="#a2a2a2"/>
<polygon points="283.0,385 290.0,385 301.0,395 294.0,395" fill="#dedede" />
<polygon points="349.8,385 356.8,385 367.8,395 360.8,395" fill="#dedede" />
<rect x="304.3" y="377.3" width="3.5" height="17.7" fill="#d2d2d2"/>
<rect x="234" y="395" width="138.5" height="5" fill="#3a3a3a"/>
<rect x="372.5" y="346.5" width="12" height="53" fill="#1d1d1d"/>
<path d="M255 352.5H237.2V375H249 M291 352.5H321 M356 349.5H379 M268 375H283 M304 375H319 M339 375H353 M304 397H319 M366 374H375V397H366" fill="none" stroke="#a0a0a0" stroke-width="4.4" stroke-linejoin="round"/>
<path d="M255 352.5H237.2V375H249 M291 352.5H321 M356 349.5H379 M268 375H283 M304 375H319 M339 375H353 M304 397H319 M366 374H375V397H366" fill="none" stroke="#f4f4f4" stroke-width="3.1" stroke-linejoin="round"/></g>
<rect x="599.5" y="373" width="126" height="16" fill="#387cbc" stroke="#c8dcee" stroke-width="1.3"/>
<rect x="600.2" y="373.7" width="124.6" height="3.5" fill="#5a98d0"/>
<path d="M637 366H624.5V389 M766 316.5V372H794" fill="none" stroke="#8c8c8c" stroke-width="3.4" stroke-linejoin="round"/>
<path d="M637 366H624.5V389 M766 316.5V372H794" fill="none" stroke="#f2f2f2" stroke-width="2.3" stroke-linejoin="round"/>
<rect x="656.3" y="389" width="2.2" height="9" fill="#dcdcdc"/>
<path d="M657.5 398l6 9h10M623.4 374L632 429.6h8" fill="none" stroke="#333" stroke-width="0.9"/><circle cx="623.4" cy="375" r="1.3" fill="#223"/>
<text x="677" y="413" font-size="12" fill="#3a3a3a" font-weight="bold" text-anchor="start" font-family='"Liberation Sans",sans-serif' textLength="57.8" lengthAdjust="spacingAndGlyphs" >groundwater</text>
<text x="641" y="434.5" font-size="12" fill="#4a4a4a" font-weight="normal" text-anchor="start" font-family='"Liberation Sans",sans-serif' textLength="127" lengthAdjust="spacingAndGlyphs" >pumps in 30°C water (86° F)</text>
<rect x="491.5" y="225.5" width="323" height="219" fill="none" stroke="#1a73e8" stroke-width="1.3"/>
<line x1="653" y1="205" x2="653" y2="222" stroke="#1a73e8" stroke-width="1.3"/><circle cx="653" cy="201.5" r="3.6" fill="#1a73e8"/>
<rect x="488.0" y="222.0" width="7" height="7" fill="#1a73e8" stroke="#1558b0" stroke-width="0.8"/>
<rect x="488.0" y="331.0" width="7" height="7" fill="#1a73e8" stroke="#1558b0" stroke-width="0.8"/>
<rect x="488.0" y="441.0" width="7" height="7" fill="#1a73e8" stroke="#1558b0" stroke-width="0.8"/>
<rect x="649.5" y="222.0" width="7" height="7" fill="#1a73e8" stroke="#1558b0" stroke-width="0.8"/>
<rect x="649.5" y="441.0" width="7" height="7" fill="#1a73e8" stroke="#1558b0" stroke-width="0.8"/>
<rect x="811.0" y="222.0" width="7" height="7" fill="#1a73e8" stroke="#1558b0" stroke-width="0.8"/>
<rect x="811.0" y="331.0" width="7" height="7" fill="#1a73e8" stroke="#1558b0" stroke-width="0.8"/>
<rect x="811.0" y="441.0" width="7" height="7" fill="#1a73e8" stroke="#1558b0" stroke-width="0.8"/>
<defs><radialGradient id="gy" cx="0.42" cy="0.38" r="0.62"><stop offset="0" stop-color="#fff2a0"/><stop offset="0.3" stop-color="#f4cd2c"/><stop offset="0.8" stop-color="#dcae18"/><stop offset="1" stop-color="#9a7a10"/></radialGradient><radialGradient id="gt" cx="0.4" cy="0.35" r="0.65"><stop offset="0" stop-color="#f0e0b8"/><stop offset="0.35" stop-color="#c8a870"/><stop offset="0.85" stop-color="#8a7040"/><stop offset="1" stop-color="#5a4828"/></radialGradient><radialGradient id="gb" cx="0.4" cy="0.33" r="0.65"><stop offset="0" stop-color="#d0c4b0"/><stop offset="0.25" stop-color="#8a7a62"/><stop offset="0.75" stop-color="#64584a"/><stop offset="1" stop-color="#3a342c"/></radialGradient><radialGradient id="gd" cx="0.4" cy="0.33" r="0.65"><stop offset="0" stop-color="#c0c0c0"/><stop offset="0.22" stop-color="#6e6e6e"/><stop offset="0.7" stop-color="#4e4e4e"/><stop offset="1" stop-color="#303030"/></radialGradient><radialGradient id="gs" cx="0.4" cy="0.33" r="0.65"><stop offset="0" stop-color="#ccc4bc"/><stop offset="0.25" stop-color="#7c746c"/><stop offset="0.75" stop-color="#615952"/><stop offset="1" stop-color="#35302c"/></radialGradient></defs>
<rect x="854" y="260" width="294.5" height="149.5" fill="#232427"/>
<path d="M933.5 260h9l-4.5 7.5z" fill="#4a4b4e"/><path d="M1055 260h9l-4.5 7.5z" fill="#4a4b4e"/>
<rect x="877.5" y="273.5" width="243" height="122.5" fill="none" stroke="#c8c8c8" stroke-width="1.3" stroke-dasharray="4 3"/>
<line x1="998.5" y1="273.5" x2="998.5" y2="396" stroke="#d0d0d0" stroke-width="1" stroke-dasharray="5 2"/>
<defs><radialGradient id="pc0" cx="0.4" cy="0.33" r="0.66"><stop offset="0" stop-color="#f3e097"/><stop offset="0.25" stop-color="#e8c230"/><stop offset="0.75" stop-color="#e6bc1a"/><stop offset="1" stop-color="#957a10"/></radialGradient><radialGradient id="pc1" cx="0.4" cy="0.33" r="0.66"><stop offset="0" stop-color="#f3e097"/><stop offset="0.25" stop-color="#e8c230"/><stop offset="0.75" stop-color="#e6bc1a"/><stop offset="1" stop-color="#957a10"/></radialGradient><radialGradient id="pc2" cx="0.4" cy="0.33" r="0.66"><stop offset="0" stop-color="#f3e097"/><stop offset="0.25" stop-color="#e8c230"/><stop offset="0.75" stop-color="#e6bc1a"/><stop offset="1" stop-color="#957a10"/></radialGradient><radialGradient id="pc3" cx="0.4" cy="0.33" r="0.66"><stop offset="0" stop-color="#f3e097"/><stop offset="0.25" stop-color="#e8c230"/><stop offset="0.75" stop-color="#e6bc1a"/><stop offset="1" stop-color="#957a10"/></radialGradient><radialGradient id="pc4" cx="0.4" cy="0.33" r="0.66"><stop offset="0" stop-color="#f3e097"/><stop offset="0.25" stop-color="#e8c230"/><stop offset="0.75" stop-color="#e6bc1a"/><stop offset="1" stop-color="#957a10"/></radialGradient><radialGradient id="pc5" cx="0.4" cy="0.33" r="0.66"><stop offset="0" stop-color="#f3e097"/><stop offset="0.25" stop-color="#e8c230"/><stop offset="0.75" stop-color="#e6bc1a"/><stop offset="1" stop-color="#957a10"/></radialGradient><radialGradient id="pc6" cx="0.4" cy="0.33" r="0.66"><stop offset="0" stop-color="#efdb9a"/><stop offset="0.25" stop-color="#dfb736"/><stop offset="0.75" stop-color="#dcb020"/><stop offset="1" stop-color="#8f7214"/></radialGradient><radialGradient id="pc7" cx="0.4" cy="0.33" r="0.66"><stop offset="0" stop-color="#e2d1a7"/><stop offset="0.25" stop-color="#c6a44f"/><stop offset="0.75" stop-color="#c09a3c"/><stop offset="1" stop-color="#7c6427"/></radialGradient><radialGradient id="pc8" cx="0.4" cy="0.33" r="0.66"><stop offset="0" stop-color="#d7cab3"/><stop offset="0.25" stop-color="#b09568"/><stop offset="0.75" stop-color="#a88a58"/><stop offset="1" stop-color="#6d5939"/></radialGradient><radialGradient id="pc9" cx="0.4" cy="0.33" r="0.66"><stop offset="0" stop-color="#d0c5b7"/><stop offset="0.25" stop-color="#a28c6f"/><stop offset="0.75" stop-color="#988060"/><stop offset="1" stop-color="#62533e"/></radialGradient><radialGradient id="pc10" cx="0.4" cy="0.33" r="0.66"><stop offset="0" stop-color="#cac3bb"/><stop offset="0.25" stop-color="#958777"/><stop offset="0.75" stop-color="#8a7a68"/><stop offset="1" stop-color="#594f43"/></radialGradient><radialGradient id="pc11" cx="0.4" cy="0.33" r="0.66"><stop offset="0" stop-color="#c4bebb"/><stop offset="0.25" stop-color="#897e78"/><stop offset="0.75" stop-color="#7c706a"/><stop offset="1" stop-color="#504844"/></radialGradient><radialGradient id="pc12" cx="0.4" cy="0.33" r="0.66"><stop offset="0" stop-color="#bfbbb7"/><stop offset="0.25" stop-color="#80776f"/><stop offset="0.75" stop-color="#72685f"/><stop offset="1" stop-color="#4a433d"/></radialGradient><radialGradient id="pc13" cx="0.4" cy="0.33" r="0.66"><stop offset="0" stop-color="#bbb8b5"/><stop offset="0.25" stop-color="#78716c"/><stop offset="0.75" stop-color="#6a625c"/><stop offset="1" stop-color="#443f3b"/></radialGradient><radialGradient id="pc14" cx="0.4" cy="0.33" r="0.66"><stop offset="0" stop-color="#b8b5b3"/><stop offset="0.25" stop-color="#716c68"/><stop offset="0.75" stop-color="#625c58"/><stop offset="1" stop-color="#3f3b39"/></radialGradient><radialGradient id="pc15" cx="0.4" cy="0.33" r="0.66"><stop offset="0" stop-color="#b5b3b2"/><stop offset="0.25" stop-color="#6c6866"/><stop offset="0.75" stop-color="#5c5856"/><stop offset="1" stop-color="#3b3937"/></radialGradient><radialGradient id="pc16" cx="0.4" cy="0.33" r="0.66"><stop offset="0" stop-color="#b2b2b2"/><stop offset="0.25" stop-color="#666565"/><stop offset="0.75" stop-color="#565454"/><stop offset="1" stop-color="#373636"/></radialGradient><radialGradient id="pc17" cx="0.4" cy="0.33" r="0.66"><stop offset="0" stop-color="#b2b1b1"/><stop offset="0.25" stop-color="#656363"/><stop offset="0.75" stop-color="#545252"/><stop offset="1" stop-color="#363535"/></radialGradient><radialGradient id="pc18" cx="0.4" cy="0.33" r="0.66"><stop offset="0" stop-color="#b1b0b0"/><stop offset="0.25" stop-color="#636161"/><stop offset="0.75" stop-color="#525050"/><stop offset="1" stop-color="#353434"/></radialGradient><radialGradient id="pc19" cx="0.4" cy="0.33" r="0.66"><stop offset="0" stop-color="#b0afaf"/><stop offset="0.25" stop-color="#615f5f"/><stop offset="0.75" stop-color="#504e4e"/><stop offset="1" stop-color="#343232"/></radialGradient></defs>
<circle cx="883.1" cy="279.8" r="5.45" fill="url(#pc0)"/>
<circle cx="895.6" cy="279.0" r="5.45" fill="url(#pc1)"/>
<circle cx="908.4" cy="279.5" r="5.45" fill="url(#pc2)"/>
<circle cx="921.1" cy="280.1" r="5.45" fill="url(#pc3)"/>
<circle cx="931.6" cy="280.6" r="5.45" fill="url(#pc4)"/>
<circle cx="944.3" cy="281.2" r="5.45" fill="url(#pc5)"/>
<circle cx="956.9" cy="280.7" r="5.45" fill="url(#pc6)"/>
<circle cx="969.1" cy="280.5" r="5.45" fill="url(#pc7)"/>
<circle cx="978.9" cy="281.2" r="5.45" fill="url(#pc8)"/>
<circle cx="993.3" cy="281.3" r="5.45" fill="url(#pc9)"/>
<circle cx="1006.1" cy="279.9" r="5.45" fill="url(#pc10)"/>
<circle cx="1016.8" cy="281.4" r="5.45" fill="url(#pc11)"/>
<circle cx="1027.9" cy="279.2" r="5.45" fill="url(#pc12)"/>
<circle cx="1042.8" cy="280.0" r="5.45" fill="url(#pc13)"/>
<circle cx="1052.9" cy="280.2" r="5.45" fill="url(#pc14)"/>
<circle cx="1065.2" cy="280.4" r="5.45" fill="url(#pc15)"/>
<circle cx="1079.2" cy="280.7" r="5.45" fill="url(#pc16)"/>
<circle cx="1091.2" cy="281.6" r="5.45" fill="url(#pc17)"/>
<circle cx="1101.2" cy="281.2" r="5.45" fill="url(#pc18)"/>
<circle cx="1115.7" cy="280.4" r="5.45" fill="url(#pc19)"/>
<circle cx="882.1" cy="293.1" r="5.45" fill="url(#pc0)"/>
<circle cx="894.5" cy="291.0" r="5.45" fill="url(#pc1)"/>
<circle cx="908.9" cy="291.0" r="5.45" fill="url(#pc2)"/>
<circle cx="919.3" cy="291.2" r="5.45" fill="url(#pc3)"/>
<circle cx="932.6" cy="293.2" r="5.45" fill="url(#pc4)"/>
<circle cx="944.3" cy="290.9" r="5.45" fill="url(#pc5)"/>
<circle cx="955.5" cy="293.3" r="5.45" fill="url(#pc6)"/>
<circle cx="968.3" cy="293.6" r="5.45" fill="url(#pc7)"/>
<circle cx="979.1" cy="292.5" r="5.45" fill="url(#pc8)"/>
<circle cx="991.7" cy="291.9" r="5.45" fill="url(#pc9)"/>
<circle cx="1003.7" cy="290.9" r="5.45" fill="url(#pc10)"/>
<circle cx="1016.4" cy="293.5" r="5.45" fill="url(#pc11)"/>
<circle cx="1028.8" cy="292.1" r="5.45" fill="url(#pc12)"/>
<circle cx="1041.8" cy="292.5" r="5.45" fill="url(#pc13)"/>
<circle cx="1053.9" cy="293.4" r="5.45" fill="url(#pc14)"/>
<circle cx="1065.5" cy="292.8" r="5.45" fill="url(#pc15)"/>
<circle cx="1077.2" cy="293.5" r="5.45" fill="url(#pc16)"/>
<circle cx="1090.2" cy="290.8" r="5.45" fill="url(#pc17)"/>
<circle cx="1102.5" cy="290.9" r="5.45" fill="url(#pc18)"/>
<circle cx="1114.8" cy="291.0" r="5.45" fill="url(#pc19)"/>
<circle cx="882.9" cy="304.7" r="5.45" fill="url(#pc0)"/>
<circle cx="895.8" cy="304.9" r="5.45" fill="url(#pc1)"/>
<circle cx="906.0" cy="304.7" r="5.45" fill="url(#pc2)"/>
<circle cx="918.7" cy="304.1" r="5.45" fill="url(#pc3)"/>
<circle cx="931.1" cy="303.8" r="5.45" fill="url(#pc4)"/>
<circle cx="943.5" cy="304.5" r="5.45" fill="url(#pc5)"/>
<circle cx="955.7" cy="305.0" r="5.45" fill="url(#pc6)"/>
<circle cx="968.5" cy="304.9" r="5.45" fill="url(#pc7)"/>
<circle cx="979.6" cy="305.1" r="5.45" fill="url(#pc8)"/>
<circle cx="991.6" cy="304.0" r="5.45" fill="url(#pc9)"/>
<circle cx="1003.5" cy="303.7" r="5.45" fill="url(#pc10)"/>
<circle cx="1018.0" cy="304.0" r="5.45" fill="url(#pc11)"/>
<circle cx="1028.1" cy="303.7" r="5.45" fill="url(#pc12)"/>
<circle cx="1042.6" cy="304.1" r="5.45" fill="url(#pc13)"/>
<circle cx="1052.3" cy="304.3" r="5.45" fill="url(#pc14)"/>
<circle cx="1066.7" cy="305.1" r="5.45" fill="url(#pc15)"/>
<circle cx="1077.2" cy="305.1" r="5.45" fill="url(#pc16)"/>
<circle cx="1091.0" cy="303.8" r="5.45" fill="url(#pc17)"/>
<circle cx="1101.6" cy="305.0" r="5.45" fill="url(#pc18)"/>
<circle cx="1113.9" cy="304.0" r="5.45" fill="url(#pc19)"/>
<circle cx="882.7" cy="317.4" r="5.45" fill="url(#pc0)"/>
<circle cx="893.6" cy="317.4" r="5.45" fill="url(#pc1)"/>
<circle cx="908.9" cy="316.0" r="5.45" fill="url(#pc2)"/>
<circle cx="920.9" cy="315.4" r="5.45" fill="url(#pc3)"/>
<circle cx="932.8" cy="316.7" r="5.45" fill="url(#pc4)"/>
<circle cx="943.2" cy="315.8" r="5.45" fill="url(#pc5)"/>
<circle cx="954.7" cy="316.4" r="5.45" fill="url(#pc6)"/>
<circle cx="969.3" cy="314.9" r="5.45" fill="url(#pc7)"/>
<circle cx="981.1" cy="317.4" r="5.45" fill="url(#pc8)"/>
<circle cx="993.9" cy="316.4" r="5.45" fill="url(#pc9)"/>
<circle cx="1005.6" cy="315.3" r="5.45" fill="url(#pc10)"/>
<circle cx="1017.5" cy="316.3" r="5.45" fill="url(#pc11)"/>
<circle cx="1030.6" cy="316.5" r="5.45" fill="url(#pc12)"/>
<circle cx="1040.5" cy="317.2" r="5.45" fill="url(#pc13)"/>
<circle cx="1054.4" cy="315.8" r="5.45" fill="url(#pc14)"/>
<circle cx="1065.8" cy="317.1" r="5.45" fill="url(#pc15)"/>
<circle cx="1078.8" cy="317.4" r="5.45" fill="url(#pc16)"/>
<circle cx="1091.1" cy="314.8" r="5.45" fill="url(#pc17)"/>
<circle cx="1103.4" cy="314.9" r="5.45" fill="url(#pc18)"/>
<circle cx="1113.7" cy="316.3" r="5.45" fill="url(#pc19)"/>
<circle cx="882.9" cy="329.0" r="5.45" fill="url(#pc0)"/>
<circle cx="906.2" cy="327.1" r="5.45" fill="url(#pc2)"/>
<circle cx="921.1" cy="329.2" r="5.45" fill="url(#pc3)"/>
<circle cx="931.7" cy="327.7" r="5.45" fill="url(#pc4)"/>
<circle cx="943.4" cy="328.6" r="5.45" fill="url(#pc5)"/>
<circle cx="955.6" cy="327.3" r="5.45" fill="url(#pc6)"/>
<circle cx="967.1" cy="328.4" r="5.45" fill="url(#pc7)"/>
<circle cx="980.1" cy="327.0" r="5.45" fill="url(#pc8)"/>
<circle cx="992.2" cy="328.5" r="5.45" fill="url(#pc9)"/>
<circle cx="1004.4" cy="329.0" r="5.45" fill="url(#pc10)"/>
<circle cx="1016.8" cy="327.8" r="5.45" fill="url(#pc11)"/>
<circle cx="1029.8" cy="328.0" r="5.45" fill="url(#pc12)"/>
<circle cx="1041.2" cy="327.5" r="5.45" fill="url(#pc13)"/>
<circle cx="1054.1" cy="327.0" r="5.45" fill="url(#pc14)"/>
<circle cx="1065.5" cy="329.3" r="5.45" fill="url(#pc15)"/>
<circle cx="1077.5" cy="329.3" r="5.45" fill="url(#pc16)"/>
<circle cx="1089.3" cy="328.1" r="5.45" fill="url(#pc17)"/>
<circle cx="1103.2" cy="328.7" r="5.45" fill="url(#pc18)"/>
<circle cx="1115.4" cy="328.7" r="5.45" fill="url(#pc19)"/>
<circle cx="883.2" cy="339.1" r="5.45" fill="url(#pc0)"/>
<circle cx="893.6" cy="339.2" r="5.45" fill="url(#pc1)"/>
<circle cx="905.9" cy="339.1" r="5.45" fill="url(#pc2)"/>
<circle cx="920.8" cy="339.3" r="5.45" fill="url(#pc3)"/>
<circle cx="932.8" cy="339.1" r="5.45" fill="url(#pc4)"/>
<circle cx="944.5" cy="341.1" r="5.45" fill="url(#pc5)"/>
<circle cx="956.3" cy="341.0" r="5.45" fill="url(#pc6)"/>
<circle cx="969.1" cy="340.2" r="5.45" fill="url(#pc7)"/>
<circle cx="979.2" cy="340.9" r="5.45" fill="url(#pc8)"/>
<circle cx="991.2" cy="339.7" r="5.45" fill="url(#pc9)"/>
<circle cx="1005.8" cy="339.5" r="5.45" fill="url(#pc10)"/>
<circle cx="1016.2" cy="340.5" r="5.45" fill="url(#pc11)"/>
<circle cx="1028.8" cy="339.8" r="5.45" fill="url(#pc12)"/>
<circle cx="1040.9" cy="340.0" r="5.45" fill="url(#pc13)"/>
<circle cx="1053.5" cy="341.5" r="5.45" fill="url(#pc14)"/>
<circle cx="1066.5" cy="339.2" r="5.45" fill="url(#pc15)"/>
<circle cx="1078.7" cy="340.7" r="5.45" fill="url(#pc16)"/>
<circle cx="1090.0" cy="340.6" r="5.45" fill="url(#pc17)"/>
<circle cx="1101.1" cy="339.1" r="5.45" fill="url(#pc18)"/>
<circle cx="1115.8" cy="340.2" r="5.45" fill="url(#pc19)"/>
<circle cx="883.7" cy="351.3" r="5.45" fill="url(#pc0)"/>
<circle cx="894.2" cy="352.4" r="5.45" fill="url(#pc1)"/>
<circle cx="906.5" cy="352.7" r="5.45" fill="url(#pc2)"/>
<circle cx="918.9" cy="352.8" r="5.45" fill="url(#pc3)"/>
<circle cx="932.9" cy="352.4" r="5.45" fill="url(#pc4)"/>
<circle cx="943.0" cy="350.9" r="5.45" fill="url(#pc5)"/>
<circle cx="955.7" cy="351.3" r="5.45" fill="url(#pc6)"/>
<circle cx="967.7" cy="353.0" r="5.45" fill="url(#pc7)"/>
<circle cx="982.0" cy="352.1" r="5.45" fill="url(#pc8)"/>
<circle cx="992.5" cy="353.1" r="5.45" fill="url(#pc9)"/>
<circle cx="1005.0" cy="352.1" r="5.45" fill="url(#pc10)"/>
<circle cx="1018.1" cy="351.9" r="5.45" fill="url(#pc11)"/>
<circle cx="1030.6" cy="352.1" r="5.45" fill="url(#pc12)"/>
<circle cx="1040.5" cy="352.8" r="5.45" fill="url(#pc13)"/>
<circle cx="1055.0" cy="353.2" r="5.45" fill="url(#pc14)"/>
<circle cx="1064.7" cy="351.5" r="5.45" fill="url(#pc15)"/>
<circle cx="1078.5" cy="353.2" r="5.45" fill="url(#pc16)"/>
<circle cx="1089.3" cy="353.2" r="5.45" fill="url(#pc17)"/>
<circle cx="1102.0" cy="352.8" r="5.45" fill="url(#pc18)"/>
<circle cx="1113.1" cy="353.1" r="5.45" fill="url(#pc19)"/>
<circle cx="882.5" cy="364.4" r="5.45" fill="url(#pc0)"/>
<circle cx="893.6" cy="363.7" r="5.45" fill="url(#pc1)"/>
<circle cx="907.3" cy="363.4" r="5.45" fill="url(#pc2)"/>
<circle cx="921.0" cy="363.9" r="5.45" fill="url(#pc3)"/>
<circle cx="930.5" cy="363.6" r="5.45" fill="url(#pc4)"/>
<circle cx="942.7" cy="365.3" r="5.45" fill="url(#pc5)"/>
<circle cx="954.8" cy="365.4" r="5.45" fill="url(#pc6)"/>
<circle cx="969.1" cy="364.9" r="5.45" fill="url(#pc7)"/>
<circle cx="981.0" cy="364.6" r="5.45" fill="url(#pc8)"/>
<circle cx="991.9" cy="364.9" r="5.45" fill="url(#pc9)"/>
<circle cx="1005.4" cy="364.3" r="5.45" fill="url(#pc10)"/>
<circle cx="1017.0" cy="363.8" r="5.45" fill="url(#pc11)"/>
<circle cx="1029.7" cy="364.4" r="5.45" fill="url(#pc12)"/>
<circle cx="1041.8" cy="364.6" r="5.45" fill="url(#pc13)"/>
<circle cx="1054.8" cy="364.6" r="5.45" fill="url(#pc14)"/>
<circle cx="1067.1" cy="363.2" r="5.45" fill="url(#pc15)"/>
<circle cx="1078.6" cy="364.5" r="5.45" fill="url(#pc16)"/>
<circle cx="1090.5" cy="364.1" r="5.45" fill="url(#pc17)"/>
<circle cx="1101.2" cy="363.0" r="5.45" fill="url(#pc18)"/>
<circle cx="1115.2" cy="364.3" r="5.45" fill="url(#pc19)"/>
<circle cx="882.5" cy="375.5" r="5.45" fill="url(#pc0)"/>
<circle cx="896.4" cy="374.9" r="5.45" fill="url(#pc1)"/>
<circle cx="906.6" cy="377.0" r="5.45" fill="url(#pc2)"/>
<circle cx="919.0" cy="375.9" r="5.45" fill="url(#pc3)"/>
<circle cx="932.6" cy="375.8" r="5.45" fill="url(#pc4)"/>
<circle cx="942.7" cy="375.6" r="5.45" fill="url(#pc5)"/>
<circle cx="954.8" cy="377.0" r="5.45" fill="url(#pc6)"/>
<circle cx="967.3" cy="375.3" r="5.45" fill="url(#pc7)"/>
<circle cx="981.2" cy="377.1" r="5.45" fill="url(#pc8)"/>
<circle cx="992.9" cy="375.2" r="5.45" fill="url(#pc9)"/>
<circle cx="1003.8" cy="376.3" r="5.45" fill="url(#pc10)"/>
<circle cx="1016.0" cy="375.5" r="5.45" fill="url(#pc11)"/>
<circle cx="1027.7" cy="377.0" r="5.45" fill="url(#pc12)"/>
<circle cx="1042.8" cy="375.9" r="5.45" fill="url(#pc13)"/>
<circle cx="1053.8" cy="376.6" r="5.45" fill="url(#pc14)"/>
<circle cx="1066.3" cy="375.6" r="5.45" fill="url(#pc15)"/>
<circle cx="1077.8" cy="376.5" r="5.45" fill="url(#pc16)"/>
<circle cx="1088.5" cy="377.0" r="5.45" fill="url(#pc17)"/>
<circle cx="1102.2" cy="376.3" r="5.45" fill="url(#pc18)"/>
<circle cx="1113.4" cy="376.3" r="5.45" fill="url(#pc19)"/>
<circle cx="883.0" cy="388.6" r="5.45" fill="url(#pc0)"/>
<circle cx="895.4" cy="389.5" r="5.45" fill="url(#pc1)"/>
<circle cx="906.2" cy="389.0" r="5.45" fill="url(#pc2)"/>
<circle cx="918.1" cy="387.8" r="5.45" fill="url(#pc3)"/>
<circle cx="930.4" cy="388.3" r="5.45" fill="url(#pc4)"/>
<circle cx="943.3" cy="389.2" r="5.45" fill="url(#pc5)"/>
<circle cx="954.9" cy="389.2" r="5.45" fill="url(#pc6)"/>
<circle cx="969.6" cy="388.8" r="5.45" fill="url(#pc7)"/>
<circle cx="979.9" cy="389.1" r="5.45" fill="url(#pc8)"/>
<circle cx="993.8" cy="388.0" r="5.45" fill="url(#pc9)"/>
<circle cx="1004.8" cy="387.1" r="5.45" fill="url(#pc10)"/>
<circle cx="1015.6" cy="387.4" r="5.45" fill="url(#pc11)"/>
<circle cx="1029.2" cy="388.8" r="5.45" fill="url(#pc12)"/>
<circle cx="1041.1" cy="388.6" r="5.45" fill="url(#pc13)"/>
<circle cx="1053.4" cy="388.9" r="5.45" fill="url(#pc14)"/>
<circle cx="1064.7" cy="389.3" r="5.45" fill="url(#pc15)"/>
<circle cx="1077.5" cy="387.8" r="5.45" fill="url(#pc16)"/>
<circle cx="1090.4" cy="387.4" r="5.45" fill="url(#pc17)"/>
<circle cx="1115.3" cy="387.2" r="5.45" fill="url(#pc19)"/>
<g fill="#f7c600" stroke="#2a2000" stroke-width="0.8"><rect x="972" y="329.5" width="11.5" height="11"/><rect x="986.5" y="329.5" width="11.5" height="11"/><path d="M1000.7 329.5H1012V322l14.7 13-14.7 12.8v-7.3H1000.7z"/></g>
<rect x="1150.5" y="239.5" width="106" height="31" fill="#fff" stroke="#8a8a8a" stroke-width="1"/>
<text x="1166.4" y="258.9" font-size="14" fill="#202020" font-weight="normal" text-anchor="start" font-family='"Liberation Sans",sans-serif' textLength="74" lengthAdjust="spacingAndGlyphs" >30<tspan font-size="9" dy="-4">o</tspan><tspan dy="4"> C Water</tspan></text>
<text x="1203.5" y="301.8" font-size="14" fill="#111" font-weight="bold" text-anchor="middle" font-family='"Liberation Sans",sans-serif' textLength="88" lengthAdjust="spacingAndGlyphs" >Add labels to</text>
<text x="1204" y="318.8" font-size="14" fill="#111" font-weight="bold" text-anchor="middle" font-family='"Liberation Sans",sans-serif' textLength="110.7" lengthAdjust="spacingAndGlyphs" >your screenshot</text>
<rect x="1150.5" y="341.5" width="106" height="31" fill="#fff" stroke="#8a8a8a" stroke-width="1"/>
<text x="1176" y="360.8" font-size="14" fill="#202020" font-weight="normal" text-anchor="start" font-family='"Liberation Sans",sans-serif' textLength="54.8" lengthAdjust="spacingAndGlyphs" >11<tspan font-size="9" dy="-4">o</tspan><tspan dy="4"> C Air</tspan></text>
<text x="965.4" y="476.5" font-size="13.5" fill="#111" font-weight="bold" text-anchor="start" font-family='"Liberation Sans",sans-serif' textLength="243.9" lengthAdjust="spacingAndGlyphs" >Sim diagram showing the amount of</text>
<text x="965.4" y="492.9" font-size="13.5" font-weight="bold" font-family='"Liberation Sans",sans-serif'><tspan fill="#9933cc">Thermal Energy</tspan><tspan fill="#111"> produced in</tspan></text>
<text x="965.4" y="509.3" font-size="13.5" fill="#111" font-weight="bold" text-anchor="start" font-family='"Liberation Sans",sans-serif' textLength="191.6" lengthAdjust="spacingAndGlyphs" >Proposal #1 vs. Proposal #2.</text>
<rect x="828.5" y="529.5" width="315.5" height="166.5" fill="#232427"/>
<rect x="835" y="537" width="113.70000000000005" height="43.5" rx="1.5" fill="#47484a"/>
<path d="M887.8 580.5h8l-4 7z" fill="#47484a"/>
<line x1="835" y1="552" x2="948.7" y2="552" stroke="#3a3b3e" stroke-width="0.8"/>
<text x="891.8" y="548" font-size="9" fill="#a596e8" font-weight="normal" text-anchor="middle" font-family='"Liberation Sans",sans-serif' opacity="0.9">Sample A</text>
<text x="846" y="561" font-size="4.5" fill="#ddd" font-weight="bold" text-anchor="start" font-family='"Liberation Sans",sans-serif' >Thermal Energy</text>
<text x="907" y="561" font-size="4.5" fill="#ddd" font-weight="bold" text-anchor="start" font-family='"Liberation Sans",sans-serif' >Temperature</text>
<text x="851" y="574.5" font-size="12" fill="#c4c4c4" font-weight="normal" text-anchor="start" font-family='"Liberation Sans",sans-serif' textLength="23" lengthAdjust="spacingAndGlyphs" >60.0</text>
<text x="875" y="574.5" font-size="4.5" fill="#ddd" font-weight="bold" text-anchor="start" font-family='"Liberation Sans",sans-serif' >kJ</text>
<text x="908" y="574.5" font-size="12" fill="#c4c4c4" font-weight="normal" text-anchor="start" font-family='"Liberation Sans",sans-serif' textLength="23.5" lengthAdjust="spacingAndGlyphs" >25.0</text>
<text x="932" y="574.5" font-size="4.5" fill="#ddd" font-weight="bold" text-anchor="start" font-family='"Liberation Sans",sans-serif' >°C</text>
<rect x="1006.7" y="537" width="114.29999999999995" height="43.5" rx="1.5" fill="#47484a"/>
<path d="M1059 580.5h8l-4 7z" fill="#47484a"/>
<line x1="1006.7" y1="552" x2="1121" y2="552" stroke="#3a3b3e" stroke-width="0.8"/>
<text x="1063" y="548" font-size="9" fill="#5fbf80" font-weight="normal" text-anchor="middle" font-family='"Liberation Sans",sans-serif' opacity="0.9">Sample B</text>
<text x="1017.7" y="561" font-size="4.5" fill="#ddd" font-weight="bold" text-anchor="start" font-family='"Liberation Sans",sans-serif' >Thermal Energy</text>
<text x="1078.7" y="561" font-size="4.5" fill="#ddd" font-weight="bold" text-anchor="start" font-family='"Liberation Sans",sans-serif' >Temperature</text>
<text x="1022.7" y="574.5" font-size="12" fill="#c4c4c4" font-weight="normal" text-anchor="start" font-family='"Liberation Sans",sans-serif' textLength="23" lengthAdjust="spacingAndGlyphs" >90.0</text>
<text x="1046.7" y="574.5" font-size="4.5" fill="#ddd" font-weight="bold" text-anchor="start" font-family='"Liberation Sans",sans-serif' >kJ</text>
<text x="1079.7" y="574.5" font-size="12" fill="#c4c4c4" font-weight="normal" text-anchor="start" font-family='"Liberation Sans",sans-serif' textLength="23.5" lengthAdjust="spacingAndGlyphs" >25.0</text>
<text x="1103.7" y="574.5" font-size="4.5" fill="#ddd" font-weight="bold" text-anchor="start" font-family='"Liberation Sans",sans-serif' >°C</text>
<rect x="841" y="591.8" width="101.5" height="102.7" fill="#2a2a2c"/>
<rect x="989.4" y="591.8" width="149" height="102.7" fill="#2a2a2c"/>
<circle cx="846.6" cy="599.3" r="5.0" fill="url(#gs)"/>
<circle cx="856.6" cy="598.7" r="5.0" fill="url(#gs)"/>
<circle cx="866.7" cy="598.7" r="5.0" fill="url(#gs)"/>
<circle cx="876.1" cy="598.1" r="5.0" fill="url(#gs)"/>
<circle cx="887.5" cy="598.8" r="5.0" fill="url(#gs)"/>
<circle cx="897.9" cy="599.3" r="5.0" fill="url(#gs)"/>
<circle cx="907.3" cy="597.9" r="5.0" fill="url(#gs)"/>
<circle cx="926.5" cy="597.9" r="5.0" fill="url(#gs)"/>
<circle cx="936.6" cy="598.4" r="5.0" fill="url(#gs)"/>
<circle cx="847.1" cy="608.6" r="5.0" fill="url(#gs)"/>
<circle cx="856.6" cy="608.8" r="5.0" fill="url(#gs)"/>
<circle cx="866.3" cy="609.4" r="5.0" fill="url(#gs)"/>
<circle cx="877.4" cy="608.9" r="5.0" fill="url(#gs)"/>
<circle cx="886.4" cy="608.2" r="5.0" fill="url(#gs)"/>
<circle cx="897.5" cy="608.4" r="5.0" fill="url(#gs)"/>
<circle cx="906.9" cy="609.4" r="5.0" fill="url(#gs)"/>
<circle cx="916.3" cy="608.0" r="5.0" fill="url(#gs)"/>
<circle cx="927.2" cy="609.4" r="5.0" fill="url(#gs)"/>
<circle cx="936.6" cy="608.8" r="5.0" fill="url(#gs)"/>
<circle cx="846.1" cy="617.9" r="5.0" fill="url(#gs)"/>
<circle cx="857.4" cy="619.1" r="5.0" fill="url(#gs)"/>
<circle cx="866.2" cy="617.9" r="5.0" fill="url(#gs)"/>
<circle cx="877.3" cy="618.0" r="5.0" fill="url(#gs)"/>
<circle cx="886.8" cy="618.0" r="5.0" fill="url(#gs)"/>
<circle cx="896.3" cy="618.9" r="5.0" fill="url(#gs)"/>
<circle cx="907.0" cy="618.1" r="5.0" fill="url(#gs)"/>
<circle cx="918.0" cy="619.1" r="5.0" fill="url(#gs)"/>
<circle cx="928.0" cy="618.1" r="5.0" fill="url(#gs)"/>
<circle cx="938.0" cy="618.9" r="5.0" fill="url(#gs)"/>
<circle cx="847.4" cy="628.1" r="5.0" fill="url(#gs)"/>
<circle cx="857.1" cy="628.3" r="5.0" fill="url(#gs)"/>
<circle cx="865.9" cy="627.9" r="5.0" fill="url(#gs)"/>
<circle cx="876.3" cy="628.8" r="5.0" fill="url(#gs)"/>
<circle cx="886.8" cy="629.5" r="5.0" fill="url(#gs)"/>
<circle cx="897.1" cy="629.3" r="5.0" fill="url(#gs)"/>
<circle cx="906.5" cy="629.4" r="5.0" fill="url(#gs)"/>
<circle cx="916.7" cy="628.1" r="5.0" fill="url(#gs)"/>
<circle cx="928.1" cy="628.1" r="5.0" fill="url(#gs)"/>
<circle cx="938.1" cy="628.8" r="5.0" fill="url(#gs)"/>
<circle cx="845.8" cy="637.9" r="5.0" fill="url(#gs)"/>
<circle cx="856.1" cy="639.1" r="5.0" fill="url(#gs)"/>
<circle cx="867.3" cy="638.9" r="5.0" fill="url(#gs)"/>
<circle cx="876.2" cy="639.1" r="5.0" fill="url(#gs)"/>
<circle cx="886.4" cy="638.8" r="5.0" fill="url(#gs)"/>
<circle cx="897.2" cy="638.3" r="5.0" fill="url(#gs)"/>
<circle cx="906.6" cy="637.8" r="5.0" fill="url(#gs)"/>
<circle cx="917.1" cy="637.9" r="5.0" fill="url(#gs)"/>
<circle cx="927.1" cy="638.8" r="5.0" fill="url(#gs)"/>
<circle cx="937.2" cy="639.4" r="5.0" fill="url(#gs)"/>
<circle cx="846.8" cy="649.1" r="5.0" fill="url(#gs)"/>
<circle cx="856.0" cy="647.9" r="5.0" fill="url(#gs)"/>
<circle cx="877.2" cy="649.6" r="5.0" fill="url(#gs)"/>
<circle cx="887.1" cy="648.7" r="5.0" fill="url(#gs)"/>
<circle cx="896.7" cy="649.6" r="5.0" fill="url(#gs)"/>
<circle cx="907.2" cy="649.2" r="5.0" fill="url(#gs)"/>
<circle cx="917.6" cy="649.1" r="5.0" fill="url(#gs)"/>
<circle cx="928.0" cy="648.5" r="5.0" fill="url(#gs)"/>
<circle cx="938.1" cy="649.4" r="5.0" fill="url(#gs)"/>
<circle cx="847.0" cy="659.5" r="5.0" fill="url(#gs)"/>
<circle cx="856.8" cy="658.6" r="5.0" fill="url(#gs)"/>
<circle cx="866.9" cy="658.0" r="5.0" fill="url(#gs)"/>
<circle cx="877.7" cy="659.5" r="5.0" fill="url(#gs)"/>
<circle cx="886.7" cy="659.2" r="5.0" fill="url(#gs)"/>
<circle cx="896.9" cy="659.4" r="5.0" fill="url(#gs)"/>
<circle cx="907.6" cy="658.0" r="5.0" fill="url(#gs)"/>
<circle cx="917.2" cy="658.3" r="5.0" fill="url(#gs)"/>
<circle cx="927.3" cy="659.0" r="5.0" fill="url(#gs)"/>
<circle cx="937.0" cy="657.9" r="5.0" fill="url(#gs)"/>
<circle cx="846.8" cy="668.3" r="5.0" fill="url(#gs)"/>
<circle cx="857.3" cy="669.1" r="5.0" fill="url(#gs)"/>
<circle cx="867.4" cy="668.5" r="5.0" fill="url(#gs)"/>
<circle cx="876.3" cy="668.7" r="5.0" fill="url(#gs)"/>
<circle cx="887.6" cy="669.5" r="5.0" fill="url(#gs)"/>
<circle cx="897.1" cy="668.5" r="5.0" fill="url(#gs)"/>
<circle cx="907.1" cy="669.5" r="5.0" fill="url(#gs)"/>
<circle cx="917.6" cy="669.7" r="5.0" fill="url(#gs)"/>
<circle cx="926.7" cy="668.8" r="5.0" fill="url(#gs)"/>
<circle cx="936.9" cy="668.7" r="5.0" fill="url(#gs)"/>
<circle cx="846.5" cy="678.6" r="5.0" fill="url(#gs)"/>
<circle cx="857.5" cy="678.8" r="5.0" fill="url(#gs)"/>
<circle cx="865.9" cy="679.6" r="5.0" fill="url(#gs)"/>
<circle cx="877.2" cy="679.0" r="5.0" fill="url(#gs)"/>
<circle cx="887.4" cy="678.0" r="5.0" fill="url(#gs)"/>
<circle cx="896.9" cy="678.0" r="5.0" fill="url(#gs)"/>
<circle cx="906.6" cy="678.3" r="5.0" fill="url(#gs)"/>
<circle cx="917.4" cy="678.8" r="5.0" fill="url(#gs)"/>
<circle cx="927.6" cy="679.5" r="5.0" fill="url(#gs)"/>
<circle cx="937.7" cy="678.4" r="5.0" fill="url(#gs)"/>
<circle cx="845.9" cy="688.1" r="5.0" fill="url(#gs)"/>
<circle cx="857.0" cy="688.4" r="5.0" fill="url(#gs)"/>
<circle cx="866.4" cy="689.3" r="5.0" fill="url(#gs)"/>
<circle cx="877.0" cy="689.4" r="5.0" fill="url(#gs)"/>
<circle cx="887.4" cy="689.7" r="5.0" fill="url(#gs)"/>
<circle cx="897.8" cy="689.4" r="5.0" fill="url(#gs)"/>
<circle cx="907.0" cy="689.2" r="5.0" fill="url(#gs)"/>
<circle cx="917.0" cy="689.1" r="5.0" fill="url(#gs)"/>
<circle cx="927.8" cy="689.7" r="5.0" fill="url(#gs)"/>
<circle cx="937.7" cy="688.4" r="5.0" fill="url(#gs)"/>
<circle cx="995.1" cy="598.8" r="5.0" fill="url(#gs)"/>
<circle cx="1003.9" cy="599.2" r="5.0" fill="url(#gs)"/>
<circle cx="1015.3" cy="598.6" r="5.0" fill="url(#gs)"/>
<circle cx="1024.0" cy="599.2" r="5.0" fill="url(#gs)"/>
<circle cx="1034.0" cy="597.7" r="5.0" fill="url(#gs)"/>
<circle cx="1044.3" cy="599.0" r="5.0" fill="url(#gs)"/>
<circle cx="1053.4" cy="599.1" r="5.0" fill="url(#gs)"/>
<circle cx="1064.7" cy="597.9" r="5.0" fill="url(#gs)"/>
<circle cx="1074.6" cy="597.9" r="5.0" fill="url(#gs)"/>
<circle cx="1084.1" cy="598.9" r="5.0" fill="url(#gs)"/>
<circle cx="1094.3" cy="599.3" r="5.0" fill="url(#gs)"/>
<circle cx="1104.8" cy="597.8" r="5.0" fill="url(#gs)"/>
<circle cx="1113.9" cy="598.1" r="5.0" fill="url(#gs)"/>
<circle cx="1124.1" cy="598.5" r="5.0" fill="url(#gs)"/>
<circle cx="1133.9" cy="598.2" r="5.0" fill="url(#gs)"/>
<circle cx="995.1" cy="609.3" r="5.0" fill="url(#gs)"/>
<circle cx="1005.1" cy="609.4" r="5.0" fill="url(#gs)"/>
<circle cx="1014.5" cy="608.0" r="5.0" fill="url(#gs)"/>
<circle cx="1024.4" cy="608.7" r="5.0" fill="url(#gs)"/>
<circle cx="1035.1" cy="608.6" r="5.0" fill="url(#gs)"/>
<circle cx="1044.8" cy="608.7" r="5.0" fill="url(#gs)"/>
<circle cx="1054.5" cy="607.8" r="5.0" fill="url(#gs)"/>
<circle cx="1064.0" cy="609.4" r="5.0" fill="url(#gs)"/>
<circle cx="1073.7" cy="608.5" r="5.0" fill="url(#gs)"/>
<circle cx="1083.9" cy="609.1" r="5.0" fill="url(#gs)"/>
<circle cx="1094.0" cy="608.2" r="5.0" fill="url(#gs)"/>
<circle cx="1104.2" cy="609.3" r="5.0" fill="url(#gs)"/>
<circle cx="1114.4" cy="607.7" r="5.0" fill="url(#gs)"/>
<circle cx="1123.4" cy="608.9" r="5.0" fill="url(#gs)"/>
<circle cx="1133.5" cy="608.8" r="5.0" fill="url(#gs)"/>
<circle cx="994.9" cy="617.9" r="5.0" fill="url(#gs)"/>
<circle cx="1004.0" cy="618.1" r="5.0" fill="url(#gs)"/>
<circle cx="1014.3" cy="618.4" r="5.0" fill="url(#gs)"/>
<circle cx="1024.4" cy="618.0" r="5.0" fill="url(#gs)"/>
<circle cx="1034.5" cy="618.8" r="5.0" fill="url(#gs)"/>
<circle cx="1044.9" cy="618.8" r="5.0" fill="url(#gs)"/>
<circle cx="1053.7" cy="619.0" r="5.0" fill="url(#gs)"/>
<circle cx="1064.9" cy="618.3" r="5.0" fill="url(#gs)"/>
<circle cx="1074.9" cy="618.1" r="5.0" fill="url(#gs)"/>
<circle cx="1084.7" cy="617.9" r="5.0" fill="url(#gs)"/>
<circle cx="1094.4" cy="618.2" r="5.0" fill="url(#gs)"/>
<circle cx="1104.5" cy="618.5" r="5.0" fill="url(#gs)"/>
<circle cx="1113.2" cy="618.4" r="5.0" fill="url(#gs)"/>
<circle cx="1123.0" cy="618.1" r="5.0" fill="url(#gs)"/>
<circle cx="1134.5" cy="619.4" r="5.0" fill="url(#gs)"/>
<circle cx="994.5" cy="629.1" r="5.0" fill="url(#gs)"/>
<circle cx="1004.8" cy="628.1" r="5.0" fill="url(#gs)"/>
<circle cx="1013.7" cy="627.8" r="5.0" fill="url(#gs)"/>
<circle cx="1024.4" cy="628.8" r="5.0" fill="url(#gs)"/>
<circle cx="1033.7" cy="628.1" r="5.0" fill="url(#gs)"/>
<circle cx="1045.1" cy="629.4" r="5.0" fill="url(#gs)"/>
<circle cx="1053.4" cy="629.5" r="5.0" fill="url(#gs)"/>
<circle cx="1064.6" cy="628.3" r="5.0" fill="url(#gs)"/>
<circle cx="1074.1" cy="628.5" r="5.0" fill="url(#gs)"/>
<circle cx="1083.2" cy="629.0" r="5.0" fill="url(#gs)"/>
<circle cx="1093.4" cy="628.6" r="5.0" fill="url(#gs)"/>
<circle cx="1103.8" cy="628.1" r="5.0" fill="url(#gs)"/>
<circle cx="1113.9" cy="627.8" r="5.0" fill="url(#gs)"/>
<circle cx="1124.4" cy="629.0" r="5.0" fill="url(#gs)"/>
<circle cx="1134.0" cy="628.5" r="5.0" fill="url(#gs)"/>
<circle cx="994.5" cy="639.6" r="5.0" fill="url(#gs)"/>
<circle cx="1004.0" cy="639.4" r="5.0" fill="url(#gs)"/>
<circle cx="1014.9" cy="639.3" r="5.0" fill="url(#gs)"/>
<circle cx="1025.1" cy="639.4" r="5.0" fill="url(#gs)"/>
<circle cx="1034.8" cy="639.2" r="5.0" fill="url(#gs)"/>
<circle cx="1044.7" cy="637.9" r="5.0" fill="url(#gs)"/>
<circle cx="1054.1" cy="637.8" r="5.0" fill="url(#gs)"/>
<circle cx="1064.4" cy="638.9" r="5.0" fill="url(#gs)"/>
<circle cx="1074.9" cy="639.0" r="5.0" fill="url(#gs)"/>
<circle cx="1084.3" cy="638.8" r="5.0" fill="url(#gs)"/>
<circle cx="1093.8" cy="639.6" r="5.0" fill="url(#gs)"/>
<circle cx="1104.3" cy="639.2" r="5.0" fill="url(#gs)"/>
<circle cx="1113.0" cy="638.9" r="5.0" fill="url(#gs)"/>
<circle cx="1123.4" cy="638.5" r="5.0" fill="url(#gs)"/>
<circle cx="1133.3" cy="638.5" r="5.0" fill="url(#gs)"/>
<circle cx="994.1" cy="649.5" r="5.0" fill="url(#gs)"/>
<circle cx="1004.5" cy="649.6" r="5.0" fill="url(#gs)"/>
<circle cx="1015.3" cy="649.0" r="5.0" fill="url(#gs)"/>
<circle cx="1023.6" cy="648.9" r="5.0" fill="url(#gs)"/>
<circle cx="1033.5" cy="649.5" r="5.0" fill="url(#gs)"/>
<circle cx="1044.2" cy="648.2" r="5.0" fill="url(#gs)"/>
<circle cx="1054.4" cy="648.0" r="5.0" fill="url(#gs)"/>
<circle cx="1064.0" cy="648.8" r="5.0" fill="url(#gs)"/>
<circle cx="1073.9" cy="648.4" r="5.0" fill="url(#gs)"/>
<circle cx="1084.2" cy="648.4" r="5.0" fill="url(#gs)"/>
<circle cx="1093.6" cy="647.9" r="5.0" fill="url(#gs)"/>
<circle cx="1103.1" cy="648.1" r="5.0" fill="url(#gs)"/>
<circle cx="1113.7" cy="649.5" r="5.0" fill="url(#gs)"/>
<circle cx="1123.0" cy="649.6" r="5.0" fill="url(#gs)"/>
<circle cx="1133.0" cy="649.5" r="5.0" fill="url(#gs)"/>
<circle cx="994.5" cy="659.7" r="5.0" fill="url(#gs)"/>
<circle cx="1004.5" cy="659.6" r="5.0" fill="url(#gs)"/>
<circle cx="1014.3" cy="659.7" r="5.0" fill="url(#gs)"/>
<circle cx="1024.5" cy="658.1" r="5.0" fill="url(#gs)"/>
<circle cx="1034.2" cy="658.3" r="5.0" fill="url(#gs)"/>
<circle cx="1044.3" cy="658.1" r="5.0" fill="url(#gs)"/>
<circle cx="1054.5" cy="658.7" r="5.0" fill="url(#gs)"/>
<circle cx="1064.3" cy="658.7" r="5.0" fill="url(#gs)"/>
<circle cx="1074.2" cy="659.7" r="5.0" fill="url(#gs)"/>
<circle cx="1084.5" cy="658.3" r="5.0" fill="url(#gs)"/>
<circle cx="1094.7" cy="659.3" r="5.0" fill="url(#gs)"/>
<circle cx="1103.7" cy="658.4" r="5.0" fill="url(#gs)"/>
<circle cx="1114.0" cy="659.0" r="5.0" fill="url(#gs)"/>
<circle cx="1124.3" cy="658.2" r="5.0" fill="url(#gs)"/>
<circle cx="1134.7" cy="659.5" r="5.0" fill="url(#gs)"/>
<circle cx="993.7" cy="668.1" r="5.0" fill="url(#gs)"/>
<circle cx="1004.3" cy="669.1" r="5.0" fill="url(#gs)"/>
<circle cx="1014.5" cy="668.1" r="5.0" fill="url(#gs)"/>
<circle cx="1024.7" cy="668.9" r="5.0" fill="url(#gs)"/>
<circle cx="1034.1" cy="668.8" r="5.0" fill="url(#gs)"/>
<circle cx="1044.0" cy="669.3" r="5.0" fill="url(#gs)"/>
<circle cx="1053.4" cy="668.2" r="5.0" fill="url(#gs)"/>
<circle cx="1064.4" cy="669.3" r="5.0" fill="url(#gs)"/>
<circle cx="1074.0" cy="668.4" r="5.0" fill="url(#gs)"/>
<circle cx="1083.8" cy="669.1" r="5.0" fill="url(#gs)"/>
<circle cx="1093.7" cy="668.9" r="5.0" fill="url(#gs)"/>
<circle cx="1104.7" cy="668.7" r="5.0" fill="url(#gs)"/>
<circle cx="1113.2" cy="669.5" r="5.0" fill="url(#gs)"/>
<circle cx="1123.1" cy="669.0" r="5.0" fill="url(#gs)"/>
<circle cx="1134.1" cy="668.5" r="5.0" fill="url(#gs)"/>
<circle cx="993.7" cy="678.4" r="5.0" fill="url(#gs)"/>
<circle cx="1003.7" cy="678.5" r="5.0" fill="url(#gs)"/>
<circle cx="1014.7" cy="678.5" r="5.0" fill="url(#gs)"/>
<circle cx="1024.1" cy="679.3" r="5.0" fill="url(#gs)"/>
<circle cx="1033.6" cy="679.3" r="5.0" fill="url(#gs)"/>
<circle cx="1045.0" cy="679.7" r="5.0" fill="url(#gs)"/>
<circle cx="1054.1" cy="679.4" r="5.0" fill="url(#gs)"/>
<circle cx="1063.8" cy="678.7" r="5.0" fill="url(#gs)"/>
<circle cx="1074.8" cy="678.4" r="5.0" fill="url(#gs)"/>
<circle cx="1083.8" cy="678.7" r="5.0" fill="url(#gs)"/>
<circle cx="1093.8" cy="678.4" r="5.0" fill="url(#gs)"/>
<circle cx="1104.5" cy="679.0" r="5.0" fill="url(#gs)"/>
<circle cx="1114.0" cy="678.3" r="5.0" fill="url(#gs)"/>
<circle cx="1124.5" cy="678.5" r="5.0" fill="url(#gs)"/>
<circle cx="1133.8" cy="679.0" r="5.0" fill="url(#gs)"/>
<circle cx="995.3" cy="689.2" r="5.0" fill="url(#gs)"/>
<circle cx="1003.7" cy="689.0" r="5.0" fill="url(#gs)"/>
<circle cx="1013.7" cy="688.2" r="5.0" fill="url(#gs)"/>
<circle cx="1025.1" cy="688.2" r="5.0" fill="url(#gs)"/>
<circle cx="1033.7" cy="689.4" r="5.0" fill="url(#gs)"/>
<circle cx="1043.8" cy="688.4" r="5.0" fill="url(#gs)"/>
<circle cx="1054.2" cy="689.4" r="5.0" fill="url(#gs)"/>
<circle cx="1063.9" cy="689.8" r="5.0" fill="url(#gs)"/>
<circle cx="1074.1" cy="689.0" r="5.0" fill="url(#gs)"/>
<circle cx="1084.4" cy="689.7" r="5.0" fill="url(#gs)"/>
<circle cx="1094.6" cy="689.3" r="5.0" fill="url(#gs)"/>
<circle cx="1104.5" cy="689.6" r="5.0" fill="url(#gs)"/>
<circle cx="1114.7" cy="689.2" r="5.0" fill="url(#gs)"/>
<circle cx="1124.2" cy="689.5" r="5.0" fill="url(#gs)"/>
<circle cx="1133.7" cy="688.3" r="5.0" fill="url(#gs)"/>
<text x="948.7" y="651.2" font-size="22" fill="#f2ee1c" font-weight="bold" text-anchor="start" font-family='"Liberation Sans",sans-serif' textLength="34.7" lengthAdjust="spacingAndGlyphs" >vs.</text>
<text x="1020.8" y="671" font-size="17" fill="#ffffff" font-weight="bold" text-anchor="start" font-family='"Liberation Sans",sans-serif' textLength="81.7" lengthAdjust="spacingAndGlyphs" >EXAMPLE</text>
<rect x="1167.5" y="548.5" width="106" height="31" fill="#fff" stroke="#8a8a8a" stroke-width="1"/>
<text x="1182.3" y="568.2" font-size="14" fill="#202020" font-weight="normal" text-anchor="start" font-family='"Liberation Sans",sans-serif' textLength="76.2" lengthAdjust="spacingAndGlyphs" >Proposal #1</text>
<text x="1220.4" y="604.7" font-size="14" fill="#111" font-weight="bold" text-anchor="middle" font-family='"Liberation Sans",sans-serif' textLength="87.8" lengthAdjust="spacingAndGlyphs" >Add labels to</text>
<text x="1221.1" y="620.1" font-size="14" fill="#111" font-weight="bold" text-anchor="middle" font-family='"Liberation Sans",sans-serif' textLength="111" lengthAdjust="spacingAndGlyphs" >your screenshot</text>
<rect x="1167.5" y="638.5" width="106" height="31" fill="#fff" stroke="#8a8a8a" stroke-width="1"/>
<text x="1182.3" y="657.5" font-size="14" fill="#202020" font-weight="normal" text-anchor="start" font-family='"Liberation Sans",sans-serif' textLength="76.2" lengthAdjust="spacingAndGlyphs" >Proposal #2</text>
<text x="77.6" y="549.9" font-size="14.67" fill="#111" font-weight="bold" text-anchor="start" font-family='"Liberation Sans",sans-serif' textLength="207" lengthAdjust="spacingAndGlyphs" >Proposal #1 is better because</text>
</svg>
</body></html>
